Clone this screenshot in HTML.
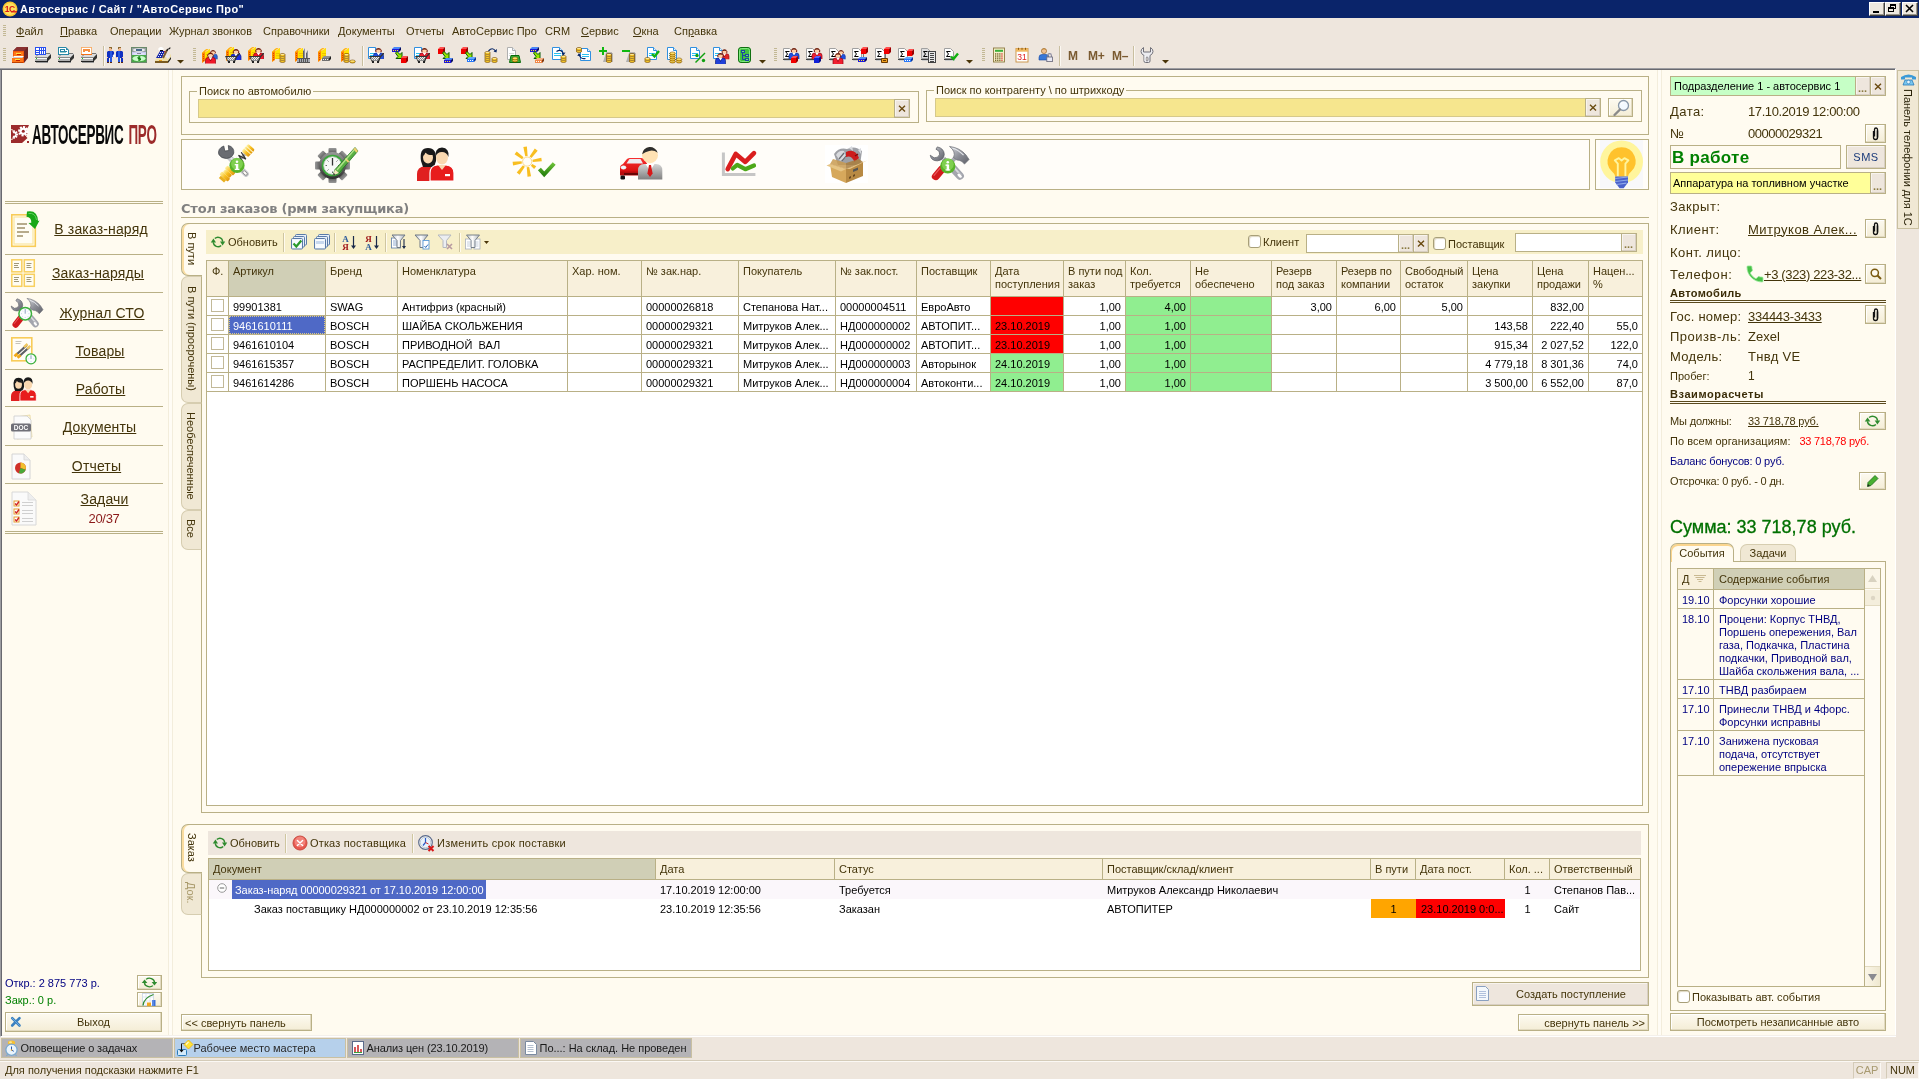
<!DOCTYPE html>
<html lang="ru"><head><meta charset="utf-8"><title>Автосервис / Сайт / "АвтоСервис Про"</title>
<style>
*{box-sizing:border-box;margin:0;padding:0}
html,body{width:1919px;height:1079px;overflow:hidden}
body{background:#EEE6DD;font:11px/13px "Liberation Sans",sans-serif;color:#000;position:relative}
#pg{position:absolute;left:0;top:0;width:1919px;height:1079px;overflow:hidden;will-change:transform}
.a{position:absolute}
.t{position:absolute;white-space:nowrap}
.u{text-decoration:underline}
.b{font-weight:bold}
.br{color:#43340A}
svg{position:absolute;overflow:visible}
.vt{position:absolute;white-space:nowrap;transform-origin:0 0;transform:rotate(90deg);color:#43340A}
.btn{position:absolute;border:1px solid #B9B086;background:linear-gradient(#FDFAF0,#F4EDD6);box-shadow:inset -1px -1px 0 #E2DAC0,inset 1px 1px 0 #fff}
.btg{position:absolute;border:1px solid #B9B086;background:#EEE6DD;box-shadow:inset -1px -1px 0 #D8CFC2,inset 1px 1px 0 #F8F4EE}
.inp{position:absolute;border:1px solid #B9B086;background:#fff}
.cell{position:absolute;white-space:nowrap;overflow:hidden;height:13px}
</style></head>
<body>
<div id="pg">
<div class="a" style="left:0px;top:0px;width:1919px;height:18px;background:#0A246A"></div>
<svg style="left:2px;top:1px" width="16" height="16" viewBox="0 0 16 16"><circle cx="8" cy="8" r="7.5" fill="#F8C830"/><circle cx="8" cy="8" r="6" fill="#FFE060"/><text x="7.6" y="11" font-family="Liberation Sans,sans-serif" font-size="8.5" font-weight="bold" text-anchor="middle" fill="#D81818" letter-spacing="-.6">1C</text><path d="M9 10.8h6" stroke="#D81818" stroke-width="1.3"/></svg>
<div class="t" style="left:20px;top:2.5px;color:#fff;font-weight:bold;letter-spacing:.35px">Автосервис / Сайт / "АвтоСервис Про"</div>
<div class="a" style="left:1869px;top:2px;width:16px;height:14px;background:#EEE9E0;border:1px solid;border-color:#fff #404040 #404040 #fff;box-shadow:inset -1px -1px 0 #9A958C"></div>
<div class="a" style="left:1873px;top:11px;width:6px;height:2px;background:#000"></div>
<div class="a" style="left:1885px;top:2px;width:16px;height:14px;background:#EEE9E0;border:1px solid;border-color:#fff #404040 #404040 #fff;box-shadow:inset -1px -1px 0 #9A958C"></div>
<div class="a" style="left:1890px;top:4px;width:6px;height:5px;border:1px solid #000;border-top-width:2px"></div>
<div class="a" style="left:1888px;top:7px;width:6px;height:5px;border:1px solid #000;border-top-width:2px;background:#EEE9E0"></div>
<div class="a" style="left:1902px;top:2px;width:16px;height:14px;background:#EEE9E0;border:1px solid;border-color:#fff #404040 #404040 #fff;box-shadow:inset -1px -1px 0 #9A958C"></div>
<svg style="left:1906px;top:5px" width="8" height="7" viewBox="0 0 8 7"><path d="M0 0l7 7M7 0l-7 7" stroke="#000" stroke-width="1.6"/></svg>
<div class="a" style="left:3px;top:25px;width:3px;height:1px;background:#C2B894"></div>
<div class="a" style="left:3px;top:27px;width:3px;height:1px;background:#C2B894"></div>
<div class="a" style="left:3px;top:29px;width:3px;height:1px;background:#C2B894"></div>
<div class="a" style="left:3px;top:31px;width:3px;height:1px;background:#C2B894"></div>
<div class="a" style="left:3px;top:33px;width:3px;height:1px;background:#C2B894"></div>
<div class="a" style="left:3px;top:35px;width:3px;height:1px;background:#C2B894"></div>
<div class="t" style="left:16px;top:24.5px;color:#43340A;"><u>Ф</u>айл</div>
<div class="t" style="left:60px;top:24.5px;color:#43340A;"><u>П</u>равка</div>
<div class="t" style="left:110px;top:24.5px;color:#43340A;">Операции</div>
<div class="t" style="left:169px;top:24.5px;color:#43340A;">Журнал звонков</div>
<div class="t" style="left:263px;top:24.5px;color:#43340A;">Справочники</div>
<div class="t" style="left:338px;top:24.5px;color:#43340A;">Документы</div>
<div class="t" style="left:406px;top:24.5px;color:#43340A;">Отчеты</div>
<div class="t" style="left:452px;top:24.5px;color:#43340A;">АвтоСервис Про</div>
<div class="t" style="left:545px;top:24.5px;color:#43340A;">CRM</div>
<div class="t" style="left:581px;top:24.5px;color:#43340A;"><u>С</u>ервис</div>
<div class="t" style="left:633px;top:24.5px;color:#43340A;"><u>О</u>кна</div>
<div class="t" style="left:674px;top:24.5px;color:#43340A;">Сп<u>р</u>авка</div>
<div class="a" style="left:3px;top:48px;width:3px;height:1px;background:#C2B894"></div>
<div class="a" style="left:3px;top:50px;width:3px;height:1px;background:#C2B894"></div>
<div class="a" style="left:3px;top:52px;width:3px;height:1px;background:#C2B894"></div>
<div class="a" style="left:3px;top:54px;width:3px;height:1px;background:#C2B894"></div>
<div class="a" style="left:3px;top:56px;width:3px;height:1px;background:#C2B894"></div>
<div class="a" style="left:3px;top:58px;width:3px;height:1px;background:#C2B894"></div>
<div class="a" style="left:3px;top:60px;width:3px;height:1px;background:#C2B894"></div>
<svg style="left:12px;top:47px" width="16" height="16" viewBox="0 0 16 16"><path d="M1 4l4-4h11v11l-4 5h-11z" fill="#6A2424"/><path d="M1 4l4-4h11l-4 4z" fill="#8A3030"/><rect x="1" y="4" width="11" height="12" fill="#F05808"/><rect x="2" y="5" width="9" height="4" fill="#FF7818"/><rect x="4" y="6" width="5" height="1" fill="#FFE040"/><rect x="5" y="7" width="4" height="1" fill="#C02000"/><path d="M0 11l2-2h10l-2 2z" fill="#fff"/><path d="M1 10.500h10" stroke="#BBB" stroke-width=".7"/><rect x="0" y="11" width="11" height="4" fill="#FF7818"/><rect x="3" y="12" width="5" height="1" fill="#FFE040"/><rect x="4" y="13" width="4" height="1" fill="#C02000"/><rect x="0" y="15" width="11" height="1" fill="#C04000"/></svg>
<svg style="left:35px;top:47px" width="16" height="16" viewBox="0 0 16 16"><path d="M0 10l4-4h12v4l-4 4h-12z" fill="#DCDCDC"/><path d="M12 11l4-4v4l-4 4z" fill="#333"/><path d="M1 9.500l3-3h11" fill="none" stroke="#777" stroke-width="1"/><rect x="0" y="10" width="12" height="1" fill="#888"/><rect x="0" y="11" width="12" height="1" fill="#F8F8F8"/><rect x="0" y="12" width="12" height="2" fill="#B0B0B0"/><rect x="0" y="14" width="13" height="1" fill="#222"/><rect x="1" y="15" width="12" height="1" fill="#999"/><rect x="1" y="11" width="1" height="1" fill="#18C018"/><rect x="0" y="0" width="11" height="8" fill="#2850F0"/><rect x="1" y="1" width="9" height="6" fill="#fff"/><rect x="1" y="3" width="9" height="1" fill="#2850F0"/><rect x="4" y="1" width="1" height="6" fill="#2850F0"/><rect x="6" y="1" width="1" height="6" fill="#2850F0"/><rect x="8" y="1" width="1" height="6" fill="#2850F0"/><rect x="1" y="5" width="3" height="1" fill="#2850F0"/></svg>
<svg style="left:58px;top:47px" width="16" height="16" viewBox="0 0 16 16"><path d="M0 10l4-4h12v4l-4 4h-12z" fill="#DCDCDC"/><path d="M12 11l4-4v4l-4 4z" fill="#333"/><path d="M1 9.500l3-3h11" fill="none" stroke="#777" stroke-width="1"/><rect x="0" y="10" width="12" height="1" fill="#888"/><rect x="0" y="11" width="12" height="1" fill="#F8F8F8"/><rect x="0" y="12" width="12" height="2" fill="#B0B0B0"/><rect x="0" y="14" width="13" height="1" fill="#222"/><rect x="1" y="15" width="12" height="1" fill="#999"/><rect x="1" y="11" width="1" height="1" fill="#18C018"/><path d="M0 0h8l3 3v5h-11z" fill="#2888A8"/><rect x="1" y="1" width="7" height="6" fill="#fff"/><rect x="8" y="3" width="2" height="4" fill="#fff"/><rect x="2" y="2" width="5" height="1" fill="#2888A8"/><rect x="2" y="4" width="7" height="1" fill="#2888A8"/><rect x="2" y="2" width="1" height="3" fill="#2888A8"/><rect x="6" y="2" width="1" height="2" fill="#2888A8"/><rect x="2" y="5" width="6" height="1" fill="#9CC"/></svg>
<svg style="left:81px;top:47px" width="16" height="16" viewBox="0 0 16 16"><path d="M0 10l4-4h12v4l-4 4h-12z" fill="#DCDCDC"/><path d="M12 11l4-4v4l-4 4z" fill="#333"/><path d="M1 9.500l3-3h11" fill="none" stroke="#777" stroke-width="1"/><rect x="0" y="10" width="12" height="1" fill="#888"/><rect x="0" y="11" width="12" height="1" fill="#F8F8F8"/><rect x="0" y="12" width="12" height="2" fill="#B0B0B0"/><rect x="0" y="14" width="13" height="1" fill="#222"/><rect x="1" y="15" width="12" height="1" fill="#999"/><rect x="1" y="11" width="1" height="1" fill="#18C018"/><rect x="0" y="0" width="11" height="8" fill="#FFE8A0"/><rect x=".5" y=".5" width="10" height="7" fill="#fff" stroke="#F07018" stroke-width="1" stroke-dasharray="1 1"/><rect x="0" y="7" width="11" height="1" fill="#F07018"/><rect x="2" y="2" width="7" height="2" fill="#F89040"/><rect x="2" y="4" width="2" height="1" fill="#F89040"/><rect x="7" y="4" width="2" height="1" fill="#F89040"/></svg>
<div class="a" style="left:103px;top:46px;width:1px;height:20px;background:#C9BFA0"></div>
<div class="a" style="left:104px;top:46px;width:1px;height:20px;background:#FBF8F2"></div>
<svg style="left:107px;top:47px" width="16" height="16" viewBox="0 0 16 16"><g transform="translate(0 0) scale(1 1)"><rect x="2" y="0" width="3" height="1" fill="#8A6A30"/><rect x="2" y="1" width="3" height="3" fill="#F0B890"/><rect x="4" y="1" width="1" height="1" fill="#8A6A30"/><path d="M1 4h5l1 1v6h-1v-1h-1v6h-2v-5h-1v5h-2v-6h0v-5z" fill="#1030C0"/><rect x="0" y="5" width="1" height="5" fill="#1030C0"/><rect x="3" y="4" width="2" height="11" fill="#2858E0"/><rect x="0" y="10" width="1" height="1" fill="#F0B890"/><rect x="6" y="10" width="1" height="1" fill="#F0B890"/><rect x="0" y="15" width="2" height="1" fill="#5A2A10"/><rect x="3" y="15" width="2" height="1" fill="#5A2A10"/></g><g transform="translate(16 0) scale(-1 1)"><rect x="2" y="0" width="3" height="1" fill="#8A6A30"/><rect x="2" y="1" width="3" height="3" fill="#F0B890"/><rect x="4" y="1" width="1" height="1" fill="#8A6A30"/><path d="M1 4h5l1 1v6h-1v-1h-1v6h-2v-5h-1v5h-2v-6h0v-5z" fill="#1030C0"/><rect x="0" y="5" width="1" height="5" fill="#1030C0"/><rect x="3" y="4" width="2" height="11" fill="#2858E0"/><rect x="0" y="10" width="1" height="1" fill="#F0B890"/><rect x="6" y="10" width="1" height="1" fill="#F0B890"/><rect x="0" y="15" width="2" height="1" fill="#5A2A10"/><rect x="3" y="15" width="2" height="1" fill="#5A2A10"/></g><path d="M7 7l1.500 2-1.500 2-1.500-2z" fill="#fff"/></svg>
<svg style="left:131px;top:47px" width="16" height="16" viewBox="0 0 16 16"><rect x="0" y="0" width="16" height="16" fill="#6A8A6A"/><rect x="1" y="1" width="14" height="4" fill="#98A0A0"/><ellipse cx="8" cy="3" rx="6" ry="1.800" fill="#E8ECEC"/><rect x="5" y="2" width="6" height="2" fill="#4A6A8A"/><rect x="1" y="5" width="14" height="3" fill="#C8C8F0"/><ellipse cx="8" cy="7" rx="6.500" ry="1.500" fill="#E0E0FA"/><rect x="6" y="6" width="4" height="1" fill="#889"/><rect x="1" y="8" width="14" height="7" fill="#48A848"/><ellipse cx="8" cy="11.500" rx="6.500" ry="2.800" fill="#C8FCC8"/><path d="M9.500 10h-2.500v1.500h2.500v1.500h-2.500M8.250 9.300v4.500" fill="none" stroke="#108010" stroke-width="1"/></svg>
<svg style="left:155px;top:47px" width="16" height="16" viewBox="0 0 16 16"><path d="M0 13l3-3h10l3-3v5l-3 4h-13z" fill="#F0E0A8"/><rect x="0" y="14" width="13" height="2" fill="#7A5A20"/><path d="M13 16l3-4v-2l-3 4z" fill="#222"/><rect x="4" y="13" width="3" height="1" fill="#E8A020"/><path d="M1 11l4-7h5l-3 7z" fill="#1828A8"/><rect x="5" y="5" width="1" height="1" fill="#E0E8FF"/><rect x="7" y="5" width="1" height="1" fill="#E0E8FF"/><rect x="4" y="7" width="1" height="1" fill="#E0E8FF"/><rect x="6" y="7" width="1" height="1" fill="#E0E8FF"/><rect x="3" y="9" width="1" height="1" fill="#E0E8FF"/><rect x="5" y="9" width="1" height="1" fill="#E0E8FF"/><rect x="8" y="7" width="1" height="1" fill="#E0E8FF"/><path d="M9 4l1.500 0-.5 2z" fill="#E01010"/><path d="M8 11l4-8" stroke="#7A5A30" stroke-width="2"/><path d="M12 4q0-2 1.500-2t1.500-1.500" fill="none" stroke="#111" stroke-width="1.200"/><path d="M3 2l2-2h2l2 2-2 1.500h-3z" fill="#fff"/><rect x="5" y="3" width="3" height="1" fill="#111"/><path d="M11 9l3-1 1 2-3 2z" fill="#E8E8F0"/></svg>
<svg style="left:177px;top:60px" width="7" height="4" viewBox="0 0 7 4"><path d="M0 0h7l-3.500 3.600z" fill="#4A3508"/></svg>
<div class="a" style="left:193px;top:48px;width:3px;height:1px;background:#C2B894"></div>
<div class="a" style="left:193px;top:50px;width:3px;height:1px;background:#C2B894"></div>
<div class="a" style="left:193px;top:52px;width:3px;height:1px;background:#C2B894"></div>
<div class="a" style="left:193px;top:54px;width:3px;height:1px;background:#C2B894"></div>
<div class="a" style="left:193px;top:56px;width:3px;height:1px;background:#C2B894"></div>
<div class="a" style="left:193px;top:58px;width:3px;height:1px;background:#C2B894"></div>
<div class="a" style="left:193px;top:60px;width:3px;height:1px;background:#C2B894"></div>
<svg style="left:202px;top:47px" width="16" height="16" viewBox="0 0 16 16"><path d="M0 6l3-3 2-1h3v11h-5l-3 2z" fill="#FFE400"/><path d="M0 6l3-2v10l-3 2z" fill="#FF8800"/><path d="M0 6l3-3 2-1h3l-5 3.500z" fill="#FFA818"/><path d="M3.5 4.5l4-2.500" stroke="#FFF8C0" stroke-width=".8"/><rect x="1" y="7" width="1" height="1" fill="#D84800"/><rect x="1" y="9" width="1" height="1" fill="#D84800"/><rect x="1" y="11" width="1" height="1" fill="#D84800"/><rect x="1" y="13" width="1" height="1" fill="#D84800"/><rect x="4" y="7.0" width="4" height="0.7" fill="#E8B000"/><rect x="4" y="9.5" width="4" height="0.7" fill="#E8B000"/><rect x="4" y="12.0" width="4" height="0.7" fill="#E8B000"/><g transform="translate(11 5.5) scale(0.85)"><path d="M-5 8v-3.500q0-2.500 2.500-2.500h5q2.500 0 2.500 2.500v3.500z" fill="#2868D8"/><path d="M-5 8v-3.500q0-2.500 2.500-2.500h1l1.500 3.500 1.500-3.500h1q2.500 0 2.500 2.500v3.500" fill="none" stroke="#103090" stroke-width=".7"/><path d="M-1.800 1.800l1.800 2.700 1.800-2.700z" fill="#fff"/><rect x="-3.300" y="-1.500" width="6.600" height="2.600" rx="1.200" fill="#7A1A10"/><circle cy="-.2" r="2.300" fill="#FFD0A8"/><path d="M-2.500-.8q0-2.200 2.500-2.200t2.500 2.200q-2.500-1.200-5 0z" fill="#6A1A0A"/></g><g transform="translate(8.5 8.5) scale(1)"><path d="M-5 8v-3.500q0-2.500 2.500-2.500h5q2.500 0 2.500 2.500v3.500z" fill="#F01828"/><path d="M-5 8v-3.500q0-2.500 2.500-2.500h1l1.500 3.500 1.500-3.500h1q2.500 0 2.500 2.500v3.500" fill="none" stroke="#900010" stroke-width=".7"/><path d="M-1.800 1.800l1.800 2.700 1.800-2.700z" fill="#fff"/><rect x="-3.300" y="-1.500" width="6.600" height="2.600" rx="1.200" fill="#7A1A10"/><circle cy="-.2" r="2.300" fill="#FFD0A8"/><path d="M-2.500-.8q0-2.200 2.500-2.200t2.500 2.200q-2.500-1.200-5 0z" fill="#6A1A0A"/></g></svg>
<svg style="left:225px;top:47px" width="16" height="16" viewBox="0 0 16 16"><path d="M1 4l3-3 2-1h3v11h-5l-3 2z" fill="#FFE400"/><path d="M1 4l3-2v10l-3 2z" fill="#FF8800"/><path d="M1 4l3-3 2-1h3l-5 3.500z" fill="#FFA818"/><path d="M4.5 2.5l4-2.500" stroke="#FFF8C0" stroke-width=".8"/><rect x="2" y="5" width="1" height="1" fill="#D84800"/><rect x="2" y="7" width="1" height="1" fill="#D84800"/><rect x="2" y="9" width="1" height="1" fill="#D84800"/><rect x="2" y="11" width="1" height="1" fill="#D84800"/><rect x="5" y="5.0" width="4" height="0.7" fill="#E8B000"/><rect x="5" y="7.5" width="4" height="0.7" fill="#E8B000"/><rect x="5" y="10.0" width="4" height="0.7" fill="#E8B000"/><g transform="translate(11 5) scale(1)"><path d="M-5 8v-3.500q0-2.500 2.500-2.500h5q2.500 0 2.500 2.500v3.500z" fill="#2030E0"/><path d="M-5 8v-3.500q0-2.500 2.500-2.500h1l1.500 3.500 1.500-3.500h1q2.500 0 2.500 2.500v3.500" fill="none" stroke="#101890" stroke-width=".7"/><path d="M-1.800 1.800l1.800 2.700 1.800-2.700z" fill="#fff"/><rect x="-3.300" y="-1.500" width="6.600" height="2.600" rx="1.200" fill="#7A1A10"/><circle cy="-.2" r="2.300" fill="#FFD0A8"/><path d="M-2.500-.8q0-2.200 2.500-2.200t2.500 2.200q-2.500-1.200-5 0z" fill="#6A1A0A"/></g><path d="M0 9h11l3-3h1v1l-3 3-2 5h-7z" fill="#333"/><path d="M1.5 10h9l-1.500 3.500h-5.500z" fill="#EEE"/><rect x="2" y="10" width="1" height="1" fill="#888"/><rect x="3" y="11" width="1" height="1" fill="#888"/><rect x="2" y="12" width="1" height="1" fill="#888"/><rect x="4" y="10" width="1" height="1" fill="#888"/><rect x="5" y="11" width="1" height="1" fill="#888"/><rect x="4" y="12" width="1" height="1" fill="#888"/><rect x="6" y="10" width="1" height="1" fill="#888"/><rect x="7" y="11" width="1" height="1" fill="#888"/><rect x="6" y="12" width="1" height="1" fill="#888"/><rect x="8" y="10" width="1" height="1" fill="#888"/><rect x="9" y="11" width="1" height="1" fill="#888"/><rect x="8" y="12" width="1" height="1" fill="#888"/><rect x="3" y="14" width="2" height="2" fill="#222"/><rect x="8" y="14" width="2" height="2" fill="#222"/><rect x="5" y="14" width="3" height="1" fill="#EEE6DD"/></svg>
<svg style="left:248px;top:47px" width="16" height="16" viewBox="0 0 16 16"><path d="M0 4l3-3 2-1h3v11h-5l-3 2z" fill="#FFE400"/><path d="M0 4l3-2v10l-3 2z" fill="#FF8800"/><path d="M0 4l3-3 2-1h3l-5 3.500z" fill="#FFA818"/><path d="M3.5 2.5l4-2.500" stroke="#FFF8C0" stroke-width=".8"/><rect x="1" y="5" width="1" height="1" fill="#D84800"/><rect x="1" y="7" width="1" height="1" fill="#D84800"/><rect x="1" y="9" width="1" height="1" fill="#D84800"/><rect x="1" y="11" width="1" height="1" fill="#D84800"/><rect x="4" y="5.0" width="4" height="0.7" fill="#E8B000"/><rect x="4" y="7.5" width="4" height="0.7" fill="#E8B000"/><rect x="4" y="10.0" width="4" height="0.7" fill="#E8B000"/><g transform="translate(10.5 4) scale(1)"><path d="M-5 8v-3.500q0-2.500 2.500-2.500h5q2.500 0 2.500 2.500v3.500z" fill="#F01828"/><path d="M-5 8v-3.500q0-2.500 2.500-2.500h1l1.500 3.500 1.500-3.500h1q2.500 0 2.500 2.500v3.500" fill="none" stroke="#900010" stroke-width=".7"/><path d="M-1.800 1.800l1.800 2.700 1.800-2.700z" fill="#fff"/><rect x="-3.300" y="-1.500" width="6.600" height="2.600" rx="1.200" fill="#7A1A10"/><circle cy="-.2" r="2.300" fill="#FFD0A8"/><path d="M-2.500-.8q0-2.200 2.500-2.200t2.500 2.200q-2.500-1.200-5 0z" fill="#6A1A0A"/></g><path d="M1 9h11l3-3h1v1l-3 3-2 5h-7z" fill="#333"/><path d="M2.5 10h9l-1.500 3.500h-5.500z" fill="#EEE"/><rect x="3" y="10" width="1" height="1" fill="#888"/><rect x="4" y="11" width="1" height="1" fill="#888"/><rect x="3" y="12" width="1" height="1" fill="#888"/><rect x="5" y="10" width="1" height="1" fill="#888"/><rect x="6" y="11" width="1" height="1" fill="#888"/><rect x="5" y="12" width="1" height="1" fill="#888"/><rect x="7" y="10" width="1" height="1" fill="#888"/><rect x="8" y="11" width="1" height="1" fill="#888"/><rect x="7" y="12" width="1" height="1" fill="#888"/><rect x="9" y="10" width="1" height="1" fill="#888"/><rect x="10" y="11" width="1" height="1" fill="#888"/><rect x="9" y="12" width="1" height="1" fill="#888"/><rect x="4" y="14" width="2" height="2" fill="#222"/><rect x="9" y="14" width="2" height="2" fill="#222"/><rect x="6" y="14" width="3" height="1" fill="#EEE6DD"/></svg>
<svg style="left:271px;top:47px" width="16" height="16" viewBox="0 0 16 16"><path d="M1 5l3-3 2-1h3v11h-5l-3 2z" fill="#FFE400"/><path d="M1 5l3-2v10l-3 2z" fill="#FF8800"/><path d="M1 5l3-3 2-1h3l-5 3.500z" fill="#FFA818"/><path d="M4.5 3.5l4-2.500" stroke="#FFF8C0" stroke-width=".8"/><rect x="2" y="6" width="1" height="1" fill="#D84800"/><rect x="2" y="8" width="1" height="1" fill="#D84800"/><rect x="2" y="10" width="1" height="1" fill="#D84800"/><rect x="2" y="12" width="1" height="1" fill="#D84800"/><rect x="5" y="6.0" width="4" height="0.7" fill="#E8B000"/><rect x="5" y="8.5" width="4" height="0.7" fill="#E8B000"/><rect x="5" y="11.0" width="4" height="0.7" fill="#E8B000"/><ellipse cx="11.5" cy="14" rx="2.800" ry="1.500" fill="#F8C41C" stroke="#6A4000" stroke-width=".6"/><path d="M9.7 13.6h3.600" stroke="#FFF8C8" stroke-width=".8"/><ellipse cx="11.5" cy="12" rx="2.800" ry="1.500" fill="#F8C41C" stroke="#6A4000" stroke-width=".6"/><path d="M9.7 11.6h3.600" stroke="#FFF8C8" stroke-width=".8"/><ellipse cx="11.5" cy="10" rx="2.800" ry="1.500" fill="#F8C41C" stroke="#6A4000" stroke-width=".6"/><path d="M9.7 9.6h3.600" stroke="#FFF8C8" stroke-width=".8"/><ellipse cx="11.5" cy="8" rx="2.800" ry="1.500" fill="#F8C41C" stroke="#6A4000" stroke-width=".6"/><path d="M9.7 7.6h3.600" stroke="#FFF8C8" stroke-width=".8"/></svg>
<svg style="left:294px;top:47px" width="16" height="16" viewBox="0 0 16 16"><path d="M1 5l3-3 2-1h3v11h-5l-3 2z" fill="#FFE400"/><path d="M1 5l3-2v10l-3 2z" fill="#FF8800"/><path d="M1 5l3-3 2-1h3l-5 3.500z" fill="#FFA818"/><path d="M4.5 3.5l4-2.500" stroke="#FFF8C0" stroke-width=".8"/><rect x="2" y="6" width="1" height="1" fill="#D84800"/><rect x="2" y="8" width="1" height="1" fill="#D84800"/><rect x="2" y="10" width="1" height="1" fill="#D84800"/><rect x="2" y="12" width="1" height="1" fill="#D84800"/><rect x="5" y="6.0" width="4" height="0.7" fill="#E8B000"/><rect x="5" y="8.5" width="4" height="0.7" fill="#E8B000"/><rect x="5" y="11.0" width="4" height="0.7" fill="#E8B000"/><path d="M9 13v-9l2-3v12zM12 13v-7l2-3v10z" fill="#8A909A"/><path d="M9.500 13v-9M12.500 13v-7" stroke="#555" stroke-width=".8"/><rect x="3" y="11" width="13" height="4" fill="#A8ACB4"/><rect x="3" y="11" width="13" height="1" fill="#555"/><rect x="3" y="15" width="13" height="1" fill="#555"/><rect x="5" y="12" width="1" height="3" fill="#555"/><rect x="7" y="12" width="1" height="3" fill="#555"/><rect x="9" y="12" width="1" height="3" fill="#555"/><rect x="11" y="12" width="1" height="3" fill="#555"/><rect x="13" y="12" width="1" height="3" fill="#555"/></svg>
<svg style="left:317px;top:47px" width="16" height="16" viewBox="0 0 16 16"><path d="M1 5l3-3 2-1h3v11h-5l-3 2z" fill="#FFE400"/><path d="M1 5l3-2v10l-3 2z" fill="#FF8800"/><path d="M1 5l3-3 2-1h3l-5 3.500z" fill="#FFA818"/><path d="M4.5 3.5l4-2.500" stroke="#FFF8C0" stroke-width=".8"/><rect x="2" y="6" width="1" height="1" fill="#D84800"/><rect x="2" y="8" width="1" height="1" fill="#D84800"/><rect x="2" y="10" width="1" height="1" fill="#D84800"/><rect x="2" y="12" width="1" height="1" fill="#D84800"/><rect x="5" y="6.0" width="4" height="0.7" fill="#E8B000"/><rect x="5" y="8.5" width="4" height="0.7" fill="#E8B000"/><rect x="5" y="11.0" width="4" height="0.7" fill="#E8B000"/><rect x="5" y="11" width="7" height="3" fill="#707070"/><path d="M5 11l2-2h7l-2 2z" fill="#909090"/><path d="M12 11l2-2v3l-2 2z" fill="#222"/><rect x="6" y="12" width="1" height="1" fill="#EEE"/><rect x="8" y="12" width="1" height="1" fill="#EEE"/><rect x="10" y="12" width="1" height="1" fill="#EEE"/></svg>
<svg style="left:340px;top:47px" width="16" height="16" viewBox="0 0 16 16"><path d="M1 5l3-3 2-1h3v11h-5l-3 2z" fill="#FFE400"/><path d="M1 5l3-2v10l-3 2z" fill="#FF8800"/><path d="M1 5l3-3 2-1h3l-5 3.500z" fill="#FFA818"/><path d="M4.5 3.5l4-2.500" stroke="#FFF8C0" stroke-width=".8"/><rect x="2" y="6" width="1" height="1" fill="#D84800"/><rect x="2" y="8" width="1" height="1" fill="#D84800"/><rect x="2" y="10" width="1" height="1" fill="#D84800"/><rect x="2" y="12" width="1" height="1" fill="#D84800"/><rect x="5" y="6.0" width="4" height="0.7" fill="#E8B000"/><rect x="5" y="8.5" width="4" height="0.7" fill="#E8B000"/><rect x="5" y="11.0" width="4" height="0.7" fill="#E8B000"/><ellipse cx="6.5" cy="14" rx="2.800" ry="1.500" fill="#F8C41C" stroke="#6A4000" stroke-width=".6"/><path d="M4.7 13.6h3.600" stroke="#FFF8C8" stroke-width=".8"/><ellipse cx="6.5" cy="12" rx="2.800" ry="1.500" fill="#F8C41C" stroke="#6A4000" stroke-width=".6"/><path d="M4.7 11.6h3.600" stroke="#FFF8C8" stroke-width=".8"/><ellipse cx="6.5" cy="10" rx="2.800" ry="1.500" fill="#F8C41C" stroke="#6A4000" stroke-width=".6"/><path d="M4.7 9.6h3.600" stroke="#FFF8C8" stroke-width=".8"/><ellipse cx="6.5" cy="8" rx="2.800" ry="1.500" fill="#F8C41C" stroke="#6A4000" stroke-width=".6"/><path d="M4.7 7.6h3.600" stroke="#FFF8C8" stroke-width=".8"/><ellipse cx="12.5" cy="14.5" rx="2.800" ry="1.500" fill="#F8C41C" stroke="#6A4000" stroke-width=".6"/><path d="M10.7 14.1h3.600" stroke="#FFF8C8" stroke-width=".8"/></svg>
<div class="a" style="left:362px;top:46px;width:1px;height:20px;background:#C9BFA0"></div>
<div class="a" style="left:363px;top:46px;width:1px;height:20px;background:#FBF8F2"></div>
<svg style="left:368px;top:47px" width="16" height="16" viewBox="0 0 16 16"><path d="M0.5 0.5h7l3 3v8h-10z" fill="#fff" stroke="#3090E0" stroke-width="1"/><path d="M7.5 0.5v3h3" fill="#E8F2FC" stroke="#3090E0" stroke-width="1"/><rect x="2" y="6" width="7" height="1" fill="#28C0F0"/><rect x="2" y="8" width="7" height="1" fill="#28C0F0"/><g transform="translate(10.5 4) scale(1)"><path d="M-5 8v-3.500q0-2.500 2.500-2.500h5q2.500 0 2.500 2.500v3.500z" fill="#2050E0"/><path d="M-5 8v-3.500q0-2.500 2.500-2.500h1l1.500 3.500 1.500-3.500h1q2.500 0 2.500 2.500v3.500" fill="none" stroke="#102890" stroke-width=".7"/><path d="M-1.800 1.800l1.800 2.700 1.800-2.700z" fill="#fff"/><rect x="-3.300" y="-1.500" width="6.600" height="2.600" rx="1.200" fill="#7A1A10"/><circle cy="-.2" r="2.300" fill="#FFD0A8"/><path d="M-2.500-.8q0-2.200 2.500-2.200t2.500 2.200q-2.500-1.200-5 0z" fill="#6A1A0A"/></g><path d="M1 9h11l3-3h1v1l-3 3-2 5h-7z" fill="#333"/><path d="M2.5 10h9l-1.500 3.500h-5.500z" fill="#EEE"/><rect x="3" y="10" width="1" height="1" fill="#888"/><rect x="4" y="11" width="1" height="1" fill="#888"/><rect x="3" y="12" width="1" height="1" fill="#888"/><rect x="5" y="10" width="1" height="1" fill="#888"/><rect x="6" y="11" width="1" height="1" fill="#888"/><rect x="5" y="12" width="1" height="1" fill="#888"/><rect x="7" y="10" width="1" height="1" fill="#888"/><rect x="8" y="11" width="1" height="1" fill="#888"/><rect x="7" y="12" width="1" height="1" fill="#888"/><rect x="9" y="10" width="1" height="1" fill="#888"/><rect x="10" y="11" width="1" height="1" fill="#888"/><rect x="9" y="12" width="1" height="1" fill="#888"/><rect x="4" y="14" width="2" height="2" fill="#222"/><rect x="9" y="14" width="2" height="2" fill="#222"/><rect x="6" y="14" width="3" height="1" fill="#EEE6DD"/></svg>
<svg style="left:391px;top:47px" width="16" height="16" viewBox="0 0 16 16"><rect x="1" y="2" width="7" height="3" fill="#2018D8"/><path d="M1 2l2-2h7l-2 2z" fill="#4888F8"/><path d="M8 2l2-2v3l-2 2z" fill="#081060"/><rect x="2" y="3" width="1" height="1" fill="#FFE820"/><rect x="4" y="3" width="1" height="1" fill="#FFE820"/><rect x="6" y="3" width="1" height="1" fill="#FFE820"/><path d="M4.5 6l1.500-1.500 3 3 2-2v6h-6l2-2z" fill="#98E800" stroke="#085808" stroke-width="1"/><rect x="10" y="11" width="5" height="5" fill="#F00000"/><path d="M10 11l2-2h5l-2 2z" fill="#FF5050"/><path d="M15 11l2-2v5l-2 2z" fill="#980000"/></svg>
<svg style="left:414px;top:47px" width="16" height="16" viewBox="0 0 16 16"><path d="M0.5 0.5h7l3 3v8h-10z" fill="#fff" stroke="#3090E0" stroke-width="1"/><path d="M7.5 0.5v3h3" fill="#E8F2FC" stroke="#3090E0" stroke-width="1"/><rect x="2" y="6" width="7" height="1" fill="#28C0F0"/><rect x="2" y="8" width="7" height="1" fill="#28C0F0"/><g transform="translate(10.5 4) scale(1)"><path d="M-5 8v-3.500q0-2.500 2.500-2.500h5q2.500 0 2.500 2.500v3.500z" fill="#F02030"/><path d="M-5 8v-3.500q0-2.500 2.500-2.500h1l1.500 3.500 1.500-3.500h1q2.500 0 2.500 2.500v3.500" fill="none" stroke="#900010" stroke-width=".7"/><path d="M-1.800 1.800l1.800 2.700 1.800-2.700z" fill="#fff"/><rect x="-3.300" y="-1.500" width="6.600" height="2.600" rx="1.200" fill="#7A1A10"/><circle cy="-.2" r="2.300" fill="#FFD0A8"/><path d="M-2.500-.8q0-2.200 2.500-2.200t2.500 2.200q-2.500-1.200-5 0z" fill="#6A1A0A"/></g><path d="M1 9h11l3-3h1v1l-3 3-2 5h-7z" fill="#333"/><path d="M2.5 10h9l-1.500 3.500h-5.500z" fill="#EEE"/><rect x="3" y="10" width="1" height="1" fill="#888"/><rect x="4" y="11" width="1" height="1" fill="#888"/><rect x="3" y="12" width="1" height="1" fill="#888"/><rect x="5" y="10" width="1" height="1" fill="#888"/><rect x="6" y="11" width="1" height="1" fill="#888"/><rect x="5" y="12" width="1" height="1" fill="#888"/><rect x="7" y="10" width="1" height="1" fill="#888"/><rect x="8" y="11" width="1" height="1" fill="#888"/><rect x="7" y="12" width="1" height="1" fill="#888"/><rect x="9" y="10" width="1" height="1" fill="#888"/><rect x="10" y="11" width="1" height="1" fill="#888"/><rect x="9" y="12" width="1" height="1" fill="#888"/><rect x="4" y="14" width="2" height="2" fill="#222"/><rect x="9" y="14" width="2" height="2" fill="#222"/><rect x="6" y="14" width="3" height="1" fill="#EEE6DD"/></svg>
<svg style="left:437px;top:47px" width="16" height="16" viewBox="0 0 16 16"><rect x="1" y="2" width="5" height="5" fill="#F00000"/><path d="M1 2l2-2h5l-2 2z" fill="#FF5050"/><path d="M6 2l2-2v5l-2 2z" fill="#980000"/><path d="M5.5 6l1.500-1.500 3 3 2-2v6h-6l2-2z" fill="#98E800" stroke="#085808" stroke-width="1"/><rect x="7" y="13" width="7" height="3" fill="#2018D8"/><path d="M7 13l2-2h7l-2 2z" fill="#4888F8"/><path d="M14 13l2-2v3l-2 2z" fill="#081060"/><rect x="8" y="14" width="1" height="1" fill="#FFE820"/><rect x="10" y="14" width="1" height="1" fill="#FFE820"/><rect x="12" y="14" width="1" height="1" fill="#FFE820"/></svg>
<svg style="left:460px;top:47px" width="16" height="16" viewBox="0 0 16 16"><rect x="1" y="2" width="5" height="5" fill="#F00000"/><path d="M1 2l2-2h5l-2 2z" fill="#FF5050"/><path d="M6 2l2-2v5l-2 2z" fill="#980000"/><path d="M5.5 6l1.500-1.500 3 3 2-2v6h-6l2-2z" fill="#98E800" stroke="#085808" stroke-width="1"/><rect x="7" y="12" width="7" height="3" fill="#2878F8"/><path d="M7 12l2-2h7l-2 2z" fill="#60A8FF"/><path d="M14 12l2-2v3l-2 2z" fill="#0838A0"/><rect x="8" y="13" width="1" height="1" fill="#fff"/><rect x="10" y="13" width="1" height="1" fill="#fff"/><rect x="12" y="13" width="1" height="1" fill="#fff"/></svg>
<svg style="left:483px;top:47px" width="16" height="16" viewBox="0 0 16 16"><ellipse cx="4.5" cy="14" rx="2.800" ry="1.500" fill="#F8C41C" stroke="#6A4000" stroke-width=".6"/><path d="M2.7 13.6h3.600" stroke="#FFF8C8" stroke-width=".8"/><ellipse cx="4.5" cy="12" rx="2.800" ry="1.500" fill="#F8C41C" stroke="#6A4000" stroke-width=".6"/><path d="M2.7 11.6h3.600" stroke="#FFF8C8" stroke-width=".8"/><ellipse cx="4.5" cy="10" rx="2.800" ry="1.500" fill="#F8C41C" stroke="#6A4000" stroke-width=".6"/><path d="M2.7 9.6h3.600" stroke="#FFF8C8" stroke-width=".8"/><ellipse cx="4.5" cy="8" rx="2.800" ry="1.500" fill="#F8C41C" stroke="#6A4000" stroke-width=".6"/><path d="M2.7 7.6h3.600" stroke="#FFF8C8" stroke-width=".8"/><ellipse cx="4.5" cy="6" rx="2.800" ry="1.500" fill="#F8C41C" stroke="#6A4000" stroke-width=".6"/><path d="M2.7 5.6h3.600" stroke="#FFF8C8" stroke-width=".8"/><ellipse cx="11.5" cy="14" rx="2.800" ry="1.500" fill="#F8C41C" stroke="#6A4000" stroke-width=".6"/><path d="M9.7 13.6h3.600" stroke="#FFF8C8" stroke-width=".8"/><ellipse cx="11.5" cy="12" rx="2.800" ry="1.500" fill="#F8C41C" stroke="#6A4000" stroke-width=".6"/><path d="M9.7 11.6h3.600" stroke="#FFF8C8" stroke-width=".8"/><path d="M5.500 4q4-4.500 7 0" fill="none" stroke="#0A2868" stroke-width="1.200"/><path d="M10.500 4.500l3 1 .5-3.500z" fill="#0A2868"/></svg>
<svg style="left:506px;top:47px" width="16" height="16" viewBox="0 0 16 16"><path d="M1.5 0.5h5l3 3v9h-8z" fill="#fff" stroke="#B0B0B0" stroke-width="1"/><path d="M6.5 0.5v3h3" fill="#E8F2FC" stroke="#B0B0B0" stroke-width="1"/><rect x="3" y="6" width="5" height="1" fill="#D8D8D8"/><rect x="3" y="8" width="5" height="1" fill="#D8D8D8"/><path d="M3.500 15.500l1.500-7h8l1.500 7z" fill="#38B038" stroke="#0A6A0A" stroke-width="1"/><ellipse cx="9" cy="13.5" rx="2.800" ry="1.500" fill="#F8C41C" stroke="#6A4000" stroke-width=".6"/><path d="M7.2 13.1h3.600" stroke="#FFF8C8" stroke-width=".8"/><ellipse cx="9" cy="11.5" rx="2.800" ry="1.500" fill="#F8C41C" stroke="#6A4000" stroke-width=".6"/><path d="M7.2 11.1h3.600" stroke="#FFF8C8" stroke-width=".8"/></svg>
<svg style="left:529px;top:47px" width="16" height="16" viewBox="0 0 16 16"><rect x="1" y="2" width="7" height="3" fill="#2018D8"/><path d="M1 2l2-2h7l-2 2z" fill="#4888F8"/><path d="M8 2l2-2v3l-2 2z" fill="#081060"/><rect x="2" y="3" width="1" height="1" fill="#FFE820"/><rect x="4" y="3" width="1" height="1" fill="#FFE820"/><rect x="6" y="3" width="1" height="1" fill="#FFE820"/><path d="M4.5 6l1.500-1.500 3 3 2-2v6h-6l2-2z" fill="#98E800" stroke="#085808" stroke-width="1"/><rect x="6" y="13" width="7" height="3" fill="#F08848"/><path d="M6 13l2-2h7l-2 2z" fill="#F8B080"/><path d="M13 13l2-2v3l-2 2z" fill="#803810"/><rect x="7" y="14" width="1" height="1" fill="#fff"/><rect x="9" y="14" width="1" height="1" fill="#fff"/><rect x="11" y="14" width="1" height="1" fill="#fff"/></svg>
<svg style="left:552px;top:47px" width="16" height="16" viewBox="0 0 16 16"><path d="M0.5 0.5h7l3 3v9h-10z" fill="#fff" stroke="#3090E0" stroke-width="1"/><path d="M7.5 0.5v3h3" fill="#E8F2FC" stroke="#3090E0" stroke-width="1"/><rect x="2" y="6" width="7" height="1" fill="#28C0F0"/><rect x="2" y="8" width="7" height="1" fill="#28C0F0"/><path d="M4.500 4.500q5-3 7 2.500" fill="none" stroke="#0A2868" stroke-width="1.200"/><path d="M9.500 6l2 2.500 2-3z" fill="#0A2868"/><ellipse cx="11.5" cy="14" rx="2.800" ry="1.500" fill="#F8C41C" stroke="#6A4000" stroke-width=".6"/><path d="M9.7 13.6h3.600" stroke="#FFF8C8" stroke-width=".8"/><ellipse cx="11.5" cy="12" rx="2.800" ry="1.500" fill="#F8C41C" stroke="#6A4000" stroke-width=".6"/><path d="M9.7 11.6h3.600" stroke="#FFF8C8" stroke-width=".8"/><ellipse cx="11.5" cy="10" rx="2.800" ry="1.500" fill="#F8C41C" stroke="#6A4000" stroke-width=".6"/><path d="M9.7 9.6h3.600" stroke="#FFF8C8" stroke-width=".8"/></svg>
<svg style="left:575px;top:47px" width="16" height="16" viewBox="0 0 16 16"><path d="M5.5 1.5h7l3 3v9h-10z" fill="#fff" stroke="#3090E0" stroke-width="1"/><path d="M12.5 1.5v3h3" fill="#E8F2FC" stroke="#3090E0" stroke-width="1"/><rect x="7" y="7" width="7" height="1" fill="#28C0F0"/><rect x="7" y="9" width="7" height="1" fill="#28C0F0"/><ellipse cx="4" cy="4" rx="2.800" ry="1.500" fill="#F8C41C" stroke="#6A4000" stroke-width=".6"/><path d="M2.2 3.6h3.600" stroke="#FFF8C8" stroke-width=".8"/><ellipse cx="4" cy="2" rx="2.800" ry="1.500" fill="#F8C41C" stroke="#6A4000" stroke-width=".6"/><path d="M2.2 1.6h3.600" stroke="#FFF8C8" stroke-width=".8"/><path d="M4 7q1 5.500 6.500 4.500" fill="none" stroke="#0A2868" stroke-width="1.200"/><path d="M2.300 9l1.700-3 1.800 2.700z" fill="#0A2868"/></svg>
<svg style="left:598px;top:47px" width="16" height="16" viewBox="0 0 16 16"><path d="M5 15l3-9h6v9z" fill="#B0B0B0"/><path d="M8 6h6v9" fill="none" stroke="#888" stroke-width="1"/><ellipse cx="11" cy="14" rx="2.800" ry="1.500" fill="#F8C41C" stroke="#6A4000" stroke-width=".6"/><path d="M9.2 13.6h3.600" stroke="#FFF8C8" stroke-width=".8"/><ellipse cx="11" cy="12" rx="2.800" ry="1.500" fill="#F8C41C" stroke="#6A4000" stroke-width=".6"/><path d="M9.2 11.6h3.600" stroke="#FFF8C8" stroke-width=".8"/><ellipse cx="11" cy="10" rx="2.800" ry="1.500" fill="#F8C41C" stroke="#6A4000" stroke-width=".6"/><path d="M9.2 9.6h3.600" stroke="#FFF8C8" stroke-width=".8"/><ellipse cx="11" cy="8" rx="2.800" ry="1.500" fill="#F8C41C" stroke="#6A4000" stroke-width=".6"/><path d="M9.2 7.6h3.600" stroke="#FFF8C8" stroke-width=".8"/><rect x="1" y="3" width="8" height="2" fill="#10B810"/><rect x="4" y="0" width="2" height="8" fill="#10B810"/></svg>
<svg style="left:621px;top:47px" width="16" height="16" viewBox="0 0 16 16"><path d="M5 15l3-9h6v9z" fill="#B0B0B0"/><path d="M8 6h6v9" fill="none" stroke="#888" stroke-width="1"/><ellipse cx="11" cy="14" rx="2.800" ry="1.500" fill="#F8C41C" stroke="#6A4000" stroke-width=".6"/><path d="M9.2 13.6h3.600" stroke="#FFF8C8" stroke-width=".8"/><ellipse cx="11" cy="12" rx="2.800" ry="1.500" fill="#F8C41C" stroke="#6A4000" stroke-width=".6"/><path d="M9.2 11.6h3.600" stroke="#FFF8C8" stroke-width=".8"/><ellipse cx="11" cy="10" rx="2.800" ry="1.500" fill="#F8C41C" stroke="#6A4000" stroke-width=".6"/><path d="M9.2 9.6h3.600" stroke="#FFF8C8" stroke-width=".8"/><ellipse cx="11" cy="8" rx="2.800" ry="1.500" fill="#F8C41C" stroke="#6A4000" stroke-width=".6"/><path d="M9.2 7.6h3.600" stroke="#FFF8C8" stroke-width=".8"/><rect x="1" y="3" width="8" height="2" fill="#10B810"/></svg>
<svg style="left:644px;top:47px" width="16" height="16" viewBox="0 0 16 16"><path d="M3.5 0.5h6l3 3v9h-9z" fill="#fff" stroke="#3090E0" stroke-width="1"/><path d="M9.5 0.5v3h3" fill="#E8F2FC" stroke="#3090E0" stroke-width="1"/><rect x="5" y="6" width="6" height="1" fill="#28C0F0"/><rect x="5" y="8" width="6" height="1" fill="#28C0F0"/><path d="M8 7l2.500 2.500 4.500-5.500" fill="none" stroke="#10B010" stroke-width="2.4"/><ellipse cx="3.5" cy="14" rx="2.800" ry="1.500" fill="#F8C41C" stroke="#6A4000" stroke-width=".6"/><path d="M1.7 13.6h3.600" stroke="#FFF8C8" stroke-width=".8"/><ellipse cx="3.5" cy="12" rx="2.800" ry="1.500" fill="#F8C41C" stroke="#6A4000" stroke-width=".6"/><path d="M1.7 11.6h3.600" stroke="#FFF8C8" stroke-width=".8"/></svg>
<svg style="left:667px;top:47px" width="16" height="16" viewBox="0 0 16 16"><path d="M0.5 0.5h6l3 3v9h-9z" fill="#fff" stroke="#3090E0" stroke-width="1"/><path d="M6.5 0.5v3h3" fill="#E8F2FC" stroke="#3090E0" stroke-width="1"/><rect x="2" y="6" width="6" height="1" fill="#28C0F0"/><rect x="2" y="8" width="6" height="1" fill="#28C0F0"/><ellipse cx="5.5" cy="14.5" rx="2.800" ry="1.500" fill="#F8C41C" stroke="#6A4000" stroke-width=".6"/><path d="M3.7 14.1h3.600" stroke="#FFF8C8" stroke-width=".8"/><ellipse cx="5.5" cy="12.5" rx="2.800" ry="1.500" fill="#F8C41C" stroke="#6A4000" stroke-width=".6"/><path d="M3.7 12.1h3.600" stroke="#FFF8C8" stroke-width=".8"/><ellipse cx="5.5" cy="10.5" rx="2.800" ry="1.500" fill="#F8C41C" stroke="#6A4000" stroke-width=".6"/><path d="M3.7 10.1h3.600" stroke="#FFF8C8" stroke-width=".8"/><ellipse cx="5.5" cy="8.5" rx="2.800" ry="1.500" fill="#F8C41C" stroke="#6A4000" stroke-width=".6"/><path d="M3.7 8.1h3.600" stroke="#FFF8C8" stroke-width=".8"/><ellipse cx="5.5" cy="6.5" rx="2.800" ry="1.500" fill="#F8C41C" stroke="#6A4000" stroke-width=".6"/><path d="M3.7 6.1h3.600" stroke="#FFF8C8" stroke-width=".8"/><ellipse cx="12" cy="14.5" rx="2.800" ry="1.500" fill="#F8C41C" stroke="#6A4000" stroke-width=".6"/><path d="M10.2 14.1h3.600" stroke="#FFF8C8" stroke-width=".8"/><ellipse cx="12" cy="12.5" rx="2.800" ry="1.500" fill="#F8C41C" stroke="#6A4000" stroke-width=".6"/><path d="M10.2 12.1h3.600" stroke="#FFF8C8" stroke-width=".8"/></svg>
<svg style="left:690px;top:47px" width="16" height="16" viewBox="0 0 16 16"><path d="M0.5 0.5h6l3 3v8h-9z" fill="#fff" stroke="#3090E0" stroke-width="1"/><path d="M6.5 0.5v3h3" fill="#E8F2FC" stroke="#3090E0" stroke-width="1"/><rect x="2" y="6" width="6" height="1" fill="#28C0F0"/><rect x="2" y="8" width="6" height="1" fill="#28C0F0"/><path d="M5.500 15.500l9.500-9.500" stroke="#10A010" stroke-width="1.400"/><circle cx="7" cy="8.500" r="1.700" fill="#10A010"/><circle cx="13.500" cy="13.500" r="1.700" fill="#10A010"/></svg>
<svg style="left:713px;top:47px" width="16" height="16" viewBox="0 0 16 16"><path d="M0.5 0.5h6l3 3v8h-9z" fill="#fff" stroke="#3090E0" stroke-width="1"/><path d="M6.5 0.5v3h3" fill="#E8F2FC" stroke="#3090E0" stroke-width="1"/><rect x="2" y="6" width="6" height="1" fill="#28C0F0"/><rect x="2" y="8" width="6" height="1" fill="#28C0F0"/><g transform="translate(11.5 5) scale(0.9)"><path d="M-5 8v-3.500q0-2.500 2.500-2.500h5q2.500 0 2.500 2.500v3.500z" fill="#E02828"/><path d="M-5 8v-3.500q0-2.500 2.500-2.500h1l1.500 3.500 1.500-3.500h1q2.500 0 2.500 2.500v3.500" fill="none" stroke="#901010" stroke-width=".7"/><path d="M-1.800 1.800l1.800 2.700 1.800-2.700z" fill="#fff"/><rect x="-3.300" y="-1.500" width="6.600" height="2.600" rx="1.200" fill="#7A1A10"/><circle cy="-.2" r="2.300" fill="#FFD0A8"/><path d="M-2.500-.8q0-2.200 2.500-2.200t2.500 2.200q-2.500-1.200-5 0z" fill="#6A1A0A"/></g><g transform="translate(7.5 9) scale(1)"><path d="M-5 8v-3.500q0-2.500 2.500-2.500h5q2.500 0 2.500 2.500v3.500z" fill="#2040D8"/><path d="M-5 8v-3.500q0-2.500 2.500-2.500h1l1.500 3.500 1.500-3.500h1q2.500 0 2.500 2.500v3.500" fill="none" stroke="#102080" stroke-width=".7"/><path d="M-1.800 1.800l1.800 2.700 1.800-2.700z" fill="#fff"/><rect x="-3.300" y="-1.500" width="6.600" height="2.600" rx="1.200" fill="#7A1A10"/><circle cy="-.2" r="2.300" fill="#FFD0A8"/><path d="M-2.500-.8q0-2.200 2.500-2.200t2.500 2.200q-2.500-1.200-5 0z" fill="#6A1A0A"/></g></svg>
<svg style="left:736px;top:47px" width="16" height="16" viewBox="0 0 16 16"><rect x="2.500" y=".5" width="12" height="15" rx="2.500" fill="#40C040" stroke="#107010" stroke-width="1"/><rect x="3.500" y="1.500" width="10" height="13" rx="2" fill="none" stroke="#80E880" stroke-width="1"/><path d="M6.500 5v7.500h3M6.500 8.500h3" fill="none" stroke="#1848A0" stroke-width="1"/><rect x="5.500" y="3.500" width="3" height="2" fill="#70E070" stroke="#1848A0" stroke-width="1"/><rect x="9.500" y="7.500" width="3" height="2" fill="#70E070" stroke="#1848A0" stroke-width="1"/><rect x="9.500" y="11.500" width="3" height="2" fill="#70E070" stroke="#1848A0" stroke-width="1"/></svg>
<svg style="left:759px;top:60px" width="7" height="4" viewBox="0 0 7 4"><path d="M0 0h7l-3.500 3.600z" fill="#4A3508"/></svg>
<div class="a" style="left:774px;top:48px;width:3px;height:1px;background:#C2B894"></div>
<div class="a" style="left:774px;top:50px;width:3px;height:1px;background:#C2B894"></div>
<div class="a" style="left:774px;top:52px;width:3px;height:1px;background:#C2B894"></div>
<div class="a" style="left:774px;top:54px;width:3px;height:1px;background:#C2B894"></div>
<div class="a" style="left:774px;top:56px;width:3px;height:1px;background:#C2B894"></div>
<div class="a" style="left:774px;top:58px;width:3px;height:1px;background:#C2B894"></div>
<div class="a" style="left:774px;top:60px;width:3px;height:1px;background:#C2B894"></div>
<svg style="left:783px;top:47px" width="16" height="16" viewBox="0 0 16 16"><path d="M0.5 1.5h6l3 3v7h-9z" fill="#fff" stroke="#A0A0A0" stroke-width="1"/><rect x="0" y="12" width="10" height="1" fill="#444"/><rect x="1" y="13" width="10" height="1" fill="#CCC"/><path d="M6.5 4.5h-4l2 2.500-2 2.500h4" fill="none" stroke="#000" stroke-width="1"/><g transform="translate(11 4) scale(1)"><path d="M-5 8v-3.500q0-2.500 2.500-2.500h5q2.500 0 2.500 2.500v3.500z" fill="#2050E0"/><path d="M-5 8v-3.500q0-2.500 2.500-2.500h1l1.500 3.500 1.500-3.500h1q2.500 0 2.500 2.500v3.500" fill="none" stroke="#102890" stroke-width=".7"/><path d="M-1.800 1.800l1.800 2.700 1.800-2.700z" fill="#fff"/><rect x="-3.300" y="-1.500" width="6.600" height="2.600" rx="1.200" fill="#7A1A10"/><circle cy="-.2" r="2.300" fill="#FFD0A8"/><path d="M-2.500-.8q0-2.200 2.500-2.200t2.500 2.200q-2.500-1.200-5 0z" fill="#6A1A0A"/></g><rect x="8" y="11" width="5" height="5" fill="#F00000"/><path d="M8 11l2-2h5l-2 2z" fill="#FF5050"/><path d="M13 11l2-2v5l-2 2z" fill="#980000"/></svg>
<svg style="left:806px;top:47px" width="16" height="16" viewBox="0 0 16 16"><path d="M0.5 1.5h6l3 3v7h-9z" fill="#fff" stroke="#A0A0A0" stroke-width="1"/><rect x="0" y="12" width="10" height="1" fill="#444"/><rect x="1" y="13" width="10" height="1" fill="#CCC"/><path d="M6.5 4.5h-4l2 2.500-2 2.500h4" fill="none" stroke="#000" stroke-width="1"/><g transform="translate(11 4) scale(1)"><path d="M-5 8v-3.500q0-2.500 2.500-2.500h5q2.500 0 2.500 2.500v3.500z" fill="#F02030"/><path d="M-5 8v-3.500q0-2.500 2.500-2.500h1l1.500 3.500 1.500-3.500h1q2.500 0 2.500 2.500v3.500" fill="none" stroke="#900010" stroke-width=".7"/><path d="M-1.800 1.800l1.800 2.700 1.800-2.700z" fill="#fff"/><rect x="-3.300" y="-1.500" width="6.600" height="2.600" rx="1.200" fill="#7A1A10"/><circle cy="-.2" r="2.300" fill="#FFD0A8"/><path d="M-2.500-.8q0-2.200 2.500-2.200t2.500 2.200q-2.500-1.200-5 0z" fill="#6A1A0A"/></g><rect x="8" y="11" width="5" height="5" fill="#1020D8"/><path d="M8 11l2-2h5l-2 2z" fill="#5868FF"/><path d="M13 11l2-2v5l-2 2z" fill="#081080"/></svg>
<svg style="left:829px;top:47px" width="16" height="16" viewBox="0 0 16 16"><path d="M0.5 1.5h6l3 3v7h-9z" fill="#fff" stroke="#A0A0A0" stroke-width="1"/><rect x="0" y="12" width="10" height="1" fill="#444"/><rect x="1" y="13" width="10" height="1" fill="#CCC"/><path d="M6.5 4.5h-4l2 2.500-2 2.500h4" fill="none" stroke="#000" stroke-width="1"/><g transform="translate(12 5.5) scale(0.85)"><path d="M-5 8v-3.500q0-2.500 2.500-2.500h5q2.500 0 2.500 2.500v3.500z" fill="#2050E0"/><path d="M-5 8v-3.500q0-2.500 2.500-2.500h1l1.500 3.500 1.500-3.500h1q2.500 0 2.500 2.500v3.500" fill="none" stroke="#102890" stroke-width=".7"/><path d="M-1.800 1.800l1.800 2.700 1.800-2.700z" fill="#fff"/><rect x="-3.300" y="-1.500" width="6.600" height="2.600" rx="1.200" fill="#7A1A10"/><circle cy="-.2" r="2.300" fill="#FFD0A8"/><path d="M-2.500-.8q0-2.200 2.500-2.200t2.500 2.200q-2.500-1.200-5 0z" fill="#6A1A0A"/></g><g transform="translate(9 9) scale(1)"><path d="M-5 8v-3.500q0-2.500 2.500-2.500h5q2.500 0 2.500 2.500v3.500z" fill="#F02030"/><path d="M-5 8v-3.500q0-2.500 2.500-2.500h1l1.500 3.500 1.500-3.500h1q2.500 0 2.500 2.500v3.500" fill="none" stroke="#900010" stroke-width=".7"/><path d="M-1.800 1.800l1.800 2.700 1.800-2.700z" fill="#fff"/><rect x="-3.300" y="-1.500" width="6.600" height="2.600" rx="1.200" fill="#7A1A10"/><circle cy="-.2" r="2.300" fill="#FFD0A8"/><path d="M-2.500-.8q0-2.200 2.500-2.200t2.500 2.200q-2.500-1.200-5 0z" fill="#6A1A0A"/></g></svg>
<svg style="left:852px;top:47px" width="16" height="16" viewBox="0 0 16 16"><path d="M0.5 1.5h6l3 3v7h-9z" fill="#fff" stroke="#A0A0A0" stroke-width="1"/><rect x="0" y="12" width="10" height="1" fill="#444"/><rect x="1" y="13" width="10" height="1" fill="#CCC"/><path d="M6.5 4.5h-4l2 2.500-2 2.500h4" fill="none" stroke="#000" stroke-width="1"/><rect x="9" y="2" width="5" height="5" fill="#F00000"/><path d="M9 2l2-2h5l-2 2z" fill="#FF5050"/><path d="M14 2l2-2v5l-2 2z" fill="#980000"/><rect x="11" y="7" width="1" height="4" fill="#777"/><rect x="6" y="12" width="7" height="3" fill="#2018D8"/><path d="M6 12l2-2h7l-2 2z" fill="#4888F8"/><path d="M13 12l2-2v3l-2 2z" fill="#081060"/><rect x="7" y="13" width="1" height="1" fill="#FFE820"/><rect x="9" y="13" width="1" height="1" fill="#FFE820"/><rect x="11" y="13" width="1" height="1" fill="#FFE820"/></svg>
<svg style="left:875px;top:47px" width="16" height="16" viewBox="0 0 16 16"><path d="M0.5 1.5h6l3 3v7h-9z" fill="#fff" stroke="#A0A0A0" stroke-width="1"/><rect x="0" y="12" width="10" height="1" fill="#444"/><rect x="1" y="13" width="10" height="1" fill="#CCC"/><path d="M6.5 4.5h-4l2 2.500-2 2.500h4" fill="none" stroke="#000" stroke-width="1"/><rect x="9" y="2" width="5" height="5" fill="#F00000"/><path d="M9 2l2-2h5l-2 2z" fill="#FF5050"/><path d="M14 2l2-2v5l-2 2z" fill="#980000"/><rect x="10" y="7" width="1" height="4" fill="#777"/><path d="M6.500 11.500h6v4h-6z" fill="#F0A020" stroke="#6A3A00" stroke-width="1"/><rect x="8" y="13" width="3" height="1" fill="#6A3A00"/></svg>
<svg style="left:898px;top:47px" width="16" height="16" viewBox="0 0 16 16"><path d="M0.5 1.5h6l3 3v7h-9z" fill="#fff" stroke="#A0A0A0" stroke-width="1"/><rect x="0" y="12" width="10" height="1" fill="#444"/><rect x="1" y="13" width="10" height="1" fill="#CCC"/><path d="M6.5 4.5h-4l2 2.500-2 2.500h4" fill="none" stroke="#000" stroke-width="1"/><rect x="9" y="4" width="5" height="5" fill="#F00000"/><path d="M9 4l2-2h5l-2 2z" fill="#FF5050"/><path d="M14 4l2-2v5l-2 2z" fill="#980000"/><rect x="6" y="12" width="7" height="3" fill="#2878F8"/><path d="M6 12l2-2h7l-2 2z" fill="#60A8FF"/><path d="M13 12l2-2v3l-2 2z" fill="#0838A0"/><rect x="7" y="13" width="1" height="1" fill="#fff"/><rect x="9" y="13" width="1" height="1" fill="#fff"/><rect x="11" y="13" width="1" height="1" fill="#fff"/></svg>
<svg style="left:921px;top:47px" width="16" height="16" viewBox="0 0 16 16"><path d="M0.5 1.5h6l3 3v7h-9z" fill="#DDD" stroke="#A0A0A0" stroke-width="1"/><rect x="0" y="12" width="10" height="1" fill="#444"/><rect x="1" y="13" width="10" height="1" fill="#CCC"/><path d="M6.5 4.5h-4l2 2.500-2 2.500h4" fill="none" stroke="#000" stroke-width="1"/><rect x="7.500" y="4.500" width="7" height="11" fill="#E8E8E8" stroke="#444" stroke-width="1"/><rect x="9" y="6" width="4" height="1" fill="#444"/><rect x="9" y="8" width="4" height="1" fill="#444"/><rect x="9" y="10" width="4" height="1" fill="#444"/><rect x="9" y="12" width="4" height="1" fill="#444"/><rect x="9" y="14" width="4" height="1" fill="#444"/></svg>
<svg style="left:944px;top:47px" width="16" height="16" viewBox="0 0 16 16"><path d="M0.5 1.5h6l3 3v7h-9z" fill="#fff" stroke="#A0A0A0" stroke-width="1"/><rect x="0" y="12" width="10" height="1" fill="#444"/><rect x="1" y="13" width="10" height="1" fill="#CCC"/><path d="M6.5 4.5h-4l2 2.500-2 2.500h4" fill="none" stroke="#000" stroke-width="1"/><path d="M7 9.5l2.500 2.500 4.500-5.500" fill="none" stroke="#10B010" stroke-width="2.4"/></svg>
<svg style="left:966px;top:60px" width="7" height="4" viewBox="0 0 7 4"><path d="M0 0h7l-3.500 3.600z" fill="#4A3508"/></svg>
<div class="a" style="left:982px;top:48px;width:3px;height:1px;background:#C2B894"></div>
<div class="a" style="left:982px;top:50px;width:3px;height:1px;background:#C2B894"></div>
<div class="a" style="left:982px;top:52px;width:3px;height:1px;background:#C2B894"></div>
<div class="a" style="left:982px;top:54px;width:3px;height:1px;background:#C2B894"></div>
<div class="a" style="left:982px;top:56px;width:3px;height:1px;background:#C2B894"></div>
<div class="a" style="left:982px;top:58px;width:3px;height:1px;background:#C2B894"></div>
<div class="a" style="left:982px;top:60px;width:3px;height:1px;background:#C2B894"></div>
<svg style="left:991px;top:47px" width="16" height="16" viewBox="0 0 16 16"><rect x="2.5" y="1" width="11" height="14" fill="#F6EFC8" stroke="#8A7A40" stroke-width=".9"/><path d="M4 2.8h8v2h-8z" fill="#38B038"/><rect x="4.0" y="6.3" width="1.3" height="1.3" fill="#6A5A20"/><rect x="6.1" y="6.3" width="1.3" height="1.3" fill="#6A5A20"/><rect x="8.2" y="6.3" width="1.3" height="1.3" fill="#6A5A20"/><rect x="10.3" y="6.3" width="1.3" height="1.3" fill="#D03030"/><rect x="4.0" y="8.4" width="1.3" height="1.3" fill="#6A5A20"/><rect x="6.1" y="8.4" width="1.3" height="1.3" fill="#6A5A20"/><rect x="8.2" y="8.4" width="1.3" height="1.3" fill="#6A5A20"/><rect x="10.3" y="8.4" width="1.3" height="1.3" fill="#D03030"/><rect x="4.0" y="10.5" width="1.3" height="1.3" fill="#6A5A20"/><rect x="6.1" y="10.5" width="1.3" height="1.3" fill="#6A5A20"/><rect x="8.2" y="10.5" width="1.3" height="1.3" fill="#6A5A20"/><rect x="10.3" y="10.5" width="1.3" height="1.3" fill="#D03030"/><rect x="4.0" y="12.600000000000001" width="1.3" height="1.3" fill="#6A5A20"/><rect x="6.1" y="12.600000000000001" width="1.3" height="1.3" fill="#6A5A20"/><rect x="8.2" y="12.600000000000001" width="1.3" height="1.3" fill="#6A5A20"/><rect x="10.3" y="12.600000000000001" width="1.3" height="1.3" fill="#D03030"/></svg>
<svg style="left:1014px;top:47px" width="16" height="16" viewBox="0 0 16 16"><rect x="2" y="1.5" width="12" height="13.5" fill="#fff" stroke="#C89040" stroke-width=".9"/><path d="M2 1.5h12v3.2h-12z" fill="#F0B860"/><path d="M4.5 .8v2M8 .8v2M11.5 .8v2" stroke="#8A5A10" stroke-width="1"/><text x="8" y="13" font-family="Liberation Sans,sans-serif" font-size="8.5" text-anchor="middle" fill="#E02020">31</text></svg>
<svg style="left:1038px;top:47px" width="16" height="16" viewBox="0 0 16 16"><circle cx="6" cy="4" r="2.6" fill="#F0C090" stroke="#8A5A20" stroke-width=".6"/><path d="M3.6 3a2.6 2.6 0 0 1 4.8 0q-2.4-1.3-4.8 0z" fill="#C08020"/><path d="M1 13v-2.5q0-3 3-3h4q3 0 3 3v2.5z" fill="#3878D8" stroke="#1848A0" stroke-width=".6"/><path d="M9.8 10v-1.6a1.8 1.8 0 0 1 3.6 0v1.6" fill="none" stroke="#8A8AA0" stroke-width="1.1"/><rect x="8.8" y="10" width="5.6" height="4.6" fill="#E8E8F4" stroke="#667" stroke-width=".8"/></svg>
<div class="a" style="left:1059px;top:46px;width:1px;height:20px;background:#C9BFA0"></div>
<div class="a" style="left:1060px;top:46px;width:1px;height:20px;background:#FBF8F2"></div>
<div class="t" style="left:1068px;top:48.5px;font-size:12px;line-height:14px;color:#7A5A30;font-weight:bold;letter-spacing:-.3px">M</div>
<div class="t" style="left:1088px;top:48.5px;font-size:12px;line-height:14px;color:#7A5A30;font-weight:bold;letter-spacing:-.3px">M+</div>
<div class="t" style="left:1112px;top:48.5px;font-size:12px;line-height:14px;color:#7A5A30;font-weight:bold;letter-spacing:-.3px">M–</div>
<div class="a" style="left:1133px;top:46px;width:1px;height:20px;background:#C9BFA0"></div>
<div class="a" style="left:1134px;top:46px;width:1px;height:20px;background:#FBF8F2"></div>
<svg style="left:1139px;top:47px" width="16" height="16" viewBox="0 0 16 16"><path d="M4.500 .5q-2.500 1.500-2.500 4 0 2.500 3 4v5.500q0 1.500 1.500 1.500h3q1.500 0 1.500-1.500v-5.500q3-1.500 3-4 0-2.500-2.500-4v4.500h-7z" fill="#ECECF0" stroke="#707078" stroke-width="1"/><rect x="7" y="10" width="2" height="4" rx="1" fill="#EEE6DD" stroke="#707078" stroke-width=".8"/><path d="M6 9v5" stroke="#fff" stroke-width="1"/></svg>
<svg style="left:1162px;top:60px" width="7" height="4" viewBox="0 0 7 4"><path d="M0 0h7l-3.500 3.600z" fill="#4A3508"/></svg>
<div class="a" style="left:0px;top:68px;width:1896px;height:969px;background:#FFFBF0;border:solid;border-width:1px 1px 1px 1px;border-color:#9D9DA1 #fff #fff #9D9DA1"></div>
<div class="a" style="left:0px;top:69px;width:1895px;height:1px;background:#69696F"></div>
<div class="a" style="left:1px;top:69px;width:1px;height:967px;background:#69696F"></div>
<div class="a" style="left:2px;top:1035px;width:1894px;height:1px;background:#F4F0EA"></div>
<div class="a" style="left:168px;top:70px;width:5px;height:965px;background:#FFFCF5;border-left:1px solid #F3EDDC;border-right:1px solid #F3EDDC"></div>
<div class="a" style="left:1657px;top:70px;width:5px;height:965px;background:#FFFCF5;border-left:1px solid #F3EDDC;border-right:1px solid #F3EDDC"></div>
<svg style="left:11px;top:125px" width="18" height="18" viewBox="0 0 18 18"><path d="M0 0h18l-2.500 5.500 1.500 1.500-2 4.500 1.500 1.500-5.500 5h-11v-5l2-2-2-2.500z" fill="#9C2B2B"/><g transform="translate(12.300 6.200)"><rect x="-1.100" y="-5.200" width="2.200" height="3" fill="#fff" transform="rotate(10)"/><rect x="-1.100" y="-5.200" width="2.200" height="3" fill="#fff" transform="rotate(55)"/><rect x="-1.100" y="-5.200" width="2.200" height="3" fill="#fff" transform="rotate(100)"/><rect x="-1.100" y="-5.200" width="2.200" height="3" fill="#fff" transform="rotate(145)"/><rect x="-1.100" y="-5.200" width="2.200" height="3" fill="#fff" transform="rotate(190)"/><rect x="-1.100" y="-5.200" width="2.200" height="3" fill="#fff" transform="rotate(235)"/><rect x="-1.100" y="-5.200" width="2.200" height="3" fill="#fff" transform="rotate(280)"/><rect x="-1.100" y="-5.200" width="2.200" height="3" fill="#fff" transform="rotate(325)"/><circle r="3.400" fill="#fff"/><circle r="1.500" fill="#9C2B2B"/></g><g transform="translate(3 9.500)"><rect x="-.9" y="-4.200" width="1.800" height="2.400" fill="#fff" transform="rotate(0)"/><rect x="-.9" y="-4.200" width="1.800" height="2.400" fill="#fff" transform="rotate(45)"/><rect x="-.9" y="-4.200" width="1.800" height="2.400" fill="#fff" transform="rotate(90)"/><rect x="-.9" y="-4.200" width="1.800" height="2.400" fill="#fff" transform="rotate(135)"/><rect x="-.9" y="-4.200" width="1.800" height="2.400" fill="#fff" transform="rotate(180)"/><rect x="-.9" y="-4.200" width="1.800" height="2.400" fill="#fff" transform="rotate(225)"/><rect x="-.9" y="-4.200" width="1.800" height="2.400" fill="#fff" transform="rotate(270)"/><rect x="-.9" y="-4.200" width="1.800" height="2.400" fill="#fff" transform="rotate(315)"/><circle r="2.600" fill="#fff"/><circle r="1.200" fill="#9C2B2B"/></g><rect x="0" y="4" width="1.500" height="11" fill="#FFFBF0"/><path d="M0 4l3 5.500-3 5.500z" fill="#9C2B2B"/><rect x="16" y="16" width="2" height="2" fill="#9C2B2B"/></svg>
<div class="t" style="left:32px;top:119.7px;font-size:27.600px;line-height:30px;font-weight:bold;letter-spacing:-.5px;word-spacing:3px;transform-origin:0 50%;transform:scaleX(.487);color:#0A0A0A">АВТОСЕРВИС <span style="color:#9C2B2B">ПРО</span></div>
<div class="a" style="left:5px;top:201px;width:158px;height:1px;background:#B9B086"></div>
<div class="a" style="left:5px;top:203px;width:158px;height:1px;background:#B9B086"></div>
<div class="a" style="left:5px;top:254px;width:158px;height:1px;background:#B9B086"></div>
<div class="a" style="left:5px;top:292px;width:158px;height:1px;background:#B9B086"></div>
<div class="a" style="left:5px;top:330px;width:158px;height:1px;background:#B9B086"></div>
<div class="a" style="left:5px;top:369px;width:158px;height:1px;background:#B9B086"></div>
<div class="a" style="left:5px;top:406px;width:158px;height:1px;background:#B9B086"></div>
<div class="a" style="left:5px;top:445px;width:158px;height:1px;background:#B9B086"></div>
<div class="a" style="left:5px;top:483px;width:158px;height:1px;background:#B9B086"></div>
<div class="a" style="left:5px;top:531px;width:158px;height:1px;background:#B9B086"></div>
<div class="a" style="left:5px;top:533px;width:158px;height:1px;background:#B9B086"></div>
<div class="t" style="left:26px;top:221px;font-size:14px;line-height:16px;color:#43340A;width:150px;text-align:center;text-decoration:underline;letter-spacing:.15px">В заказ-наряд</div>
<svg style="left:11px;top:210px" width="30" height="38" viewBox="0 0 30 38"><rect x=".8" y="4.800" width="23.500" height="31.500" fill="#FFFDF4" stroke="#F8CC58" stroke-width="1.600"/><rect x="3" y="7" width="19" height="27" fill="none" stroke="#FBE6A0" stroke-width="1.200"/><path d="M6 14h10M6 18h8M6 22h12M6 26h6" stroke="#A09068" stroke-width="1.700"/><path d="M16 1.500q10.500-2 11 9.500l1.500-.5-4.500 8.500-6.500-6 2.800-.3q.2-5.500-4.800-6z" fill="#18A818"/><path d="M17.500 3.500q7-1 8 6.500" fill="none" stroke="#60D060" stroke-width="1"/></svg>
<div class="t" style="left:23px;top:265px;font-size:14px;line-height:16px;color:#43340A;width:150px;text-align:center;text-decoration:underline;letter-spacing:.15px">Заказ-наряды</div>
<svg style="left:11px;top:259px" width="24" height="28" viewBox="0 0 24 28"><rect x="0.8" y="0.8" width="10" height="12" fill="#FFFDF4" stroke="#F8D060" stroke-width="1.500"/><path d="M3 4.5h5M3 6.5h4M3 8.5h5" fill="none" stroke="#A09878" stroke-width="1"/><rect x="13.3" y="0.8" width="10" height="12" fill="#FFFDF4" stroke="#F8D060" stroke-width="1.500"/><path d="M15.5 4.5h5M15.5 6.5h4M15.5 8.5h5" fill="none" stroke="#A09878" stroke-width="1"/><rect x="0.8" y="15.3" width="10" height="12" fill="#FFFDF4" stroke="#F8D060" stroke-width="1.500"/><path d="M3 18.5h5M3 20.5h4M3 22.5h5" fill="none" stroke="#A09878" stroke-width="1"/><rect x="13.3" y="15.3" width="10" height="12" fill="#FFFDF4" stroke="#F8D060" stroke-width="1.500"/><path d="M15.5 18.5h5M15.5 20.5h4M15.5 22.5h5" fill="none" stroke="#A09878" stroke-width="1"/></svg>
<div class="t" style="left:27px;top:305px;font-size:14px;line-height:16px;color:#43340A;width:150px;text-align:center;text-decoration:underline;letter-spacing:.15px">Журнал СТО</div>
<svg style="left:11px;top:298px" width="32" height="30" viewBox="0 0 32 30"><defs><linearGradient id="gMet" x1="0" y1="0" x2="1" y2="1"><stop offset="0" stop-color="#D8DADE"/><stop offset=".5" stop-color="#8E9098"/><stop offset="1" stop-color="#5E6068"/></linearGradient></defs><path d="M20.500 10.500l-8.500 10" stroke="#A8AAB0" stroke-width="3.400"/><path d="M10 19.800l-5.300 6.700" stroke="#D21A1E" stroke-width="6.400" stroke-linecap="round"/><path d="M8.300 19.200l-5 6.300" stroke="#E85A5E" stroke-width="1" stroke-linecap="round"/><path d="M16 .4Q24.500 1.500 29.500 7.800L32 11.700 28.300 15.700 26.200 13.500Q24 12 22.100 12.200L19.300 10Q21.500 5 16 .4z" fill="url(#gMet)" stroke="#6A6C74" stroke-width=".6"/><path d="M18.500 2q5 1.500 9 6" fill="none" stroke="#E4E6EA" stroke-width="1"/><path d="M11 11l7 7" stroke="#9A9CA4" stroke-width="4"/><path d="M19 19.500l5.500 6.500" stroke="#A4A6AE" stroke-width="6.600" stroke-linecap="round"/><path d="M19.500 18.500l5.500 6.500" stroke="#D8DADE" stroke-width="1.600" stroke-linecap="round"/><ellipse cx="24.300" cy="25.800" rx="2.600" ry="1.600" transform="rotate(50 24.300 25.800)" fill="#FFFFFF" stroke="#8A8C94" stroke-width=".5"/><path d="M6 .8q5.500 1.300 5.700 6.500-.4 5-5.700 5.600-5 .1-5.800-4.900l3.200 2.300q3.800.2 4.400-3 .2-3.200-2.900-4.500z" fill="url(#gMet)" stroke="#55575F" stroke-width=".6"/><circle cx="14.200" cy="15.700" r="6.300" fill="#FAFCFF" stroke="#3CB03C" stroke-width="1.500"/><path d="M14.200 11v4.700" stroke="#8AA0C0" stroke-width="1"/><path d="M10 15.700h1M18.400 15.700h-1M14.200 20v-1M11.200 12.700l.7.7M17.200 12.700l-.7.7M11.200 18.700l.7-.7M17.200 18.700l-.7-.7" stroke="#B8C8E0" stroke-width=".8"/></svg>
<div class="t" style="left:25px;top:343px;font-size:14px;line-height:16px;color:#43340A;width:150px;text-align:center;text-decoration:underline;letter-spacing:.15px">Товары</div>
<svg style="left:11px;top:337px" width="27" height="28" viewBox="0 0 27 28"><rect x=".8" y=".8" width="20" height="23" fill="#FFFDF6" stroke="#F8CC58" stroke-width="1.600"/><path d="M4.500 4.500h6M4.500 6.500h5" stroke="#B8B4A8" stroke-width=".8"/><path d="M5.500 17.500l10.500-9.500M8.500 19l10-9" stroke="#5E6066" stroke-width="2.200"/><path d="M13 10.200l3.500-3.200M16 11.800l3.300-3" stroke="#F0C860" stroke-width="2.400"/><path d="M3.500 19.300l3-2.700M6.500 20.800l3-2.700" stroke="#F0A818" stroke-width="2.800"/><circle cx="20" cy="21.800" r="5" fill="#FAFCFF" stroke="#3CB03C" stroke-width="1.300"/><path d="M20 18.300v3.700" stroke="#8AA0C0" stroke-width="1"/><path d="M16.800 21.800h.8M23.200 21.800h-.8M20 25v-.8" stroke="#B8C8E0" stroke-width=".8"/></svg>
<div class="t" style="left:25.5px;top:381px;font-size:14px;line-height:16px;color:#43340A;width:150px;text-align:center;text-decoration:underline;letter-spacing:.15px">Работы</div>
<svg style="left:11px;top:377px" width="27" height="25" viewBox="0 0 27 25"><g transform="scale(0.6842105263157895 0.7058823529411765)"><path d="M0 34v-7q0-7 8-8h6q6 1 7 8v7z" fill="#E02020"/><path d="M4 14q-2-13 7-13t8 13l-2 6h-11z" fill="#1A1A1A"/><ellipse cx="11" cy="10.500" rx="5" ry="6" fill="#FAD8B0"/><path d="M5.500 9q1-6 6-5.500 4 .5 5 4.500-6 .5-8-2.500-1 3-3 3.500z" fill="#1A1A1A"/><path d="M13 34v-8q0-7 7-8h9q8 1 8 8v8z" fill="#E81C1C" stroke="#fff" stroke-width="1.200"/><ellipse cx="25" cy="10.500" rx="6" ry="7" fill="#FAD8B0"/><path d="M18.500 10q-1-9 6.500-9.500 7.500.5 6.500 9.500-2-5-6.500-5-5 0-6.500 5z" fill="#1A1A1A"/><path d="M21 18l4 5 4-5z" fill="#FAD8B0"/><rect x="28" y="27" width="5" height="2.200" fill="#fff"/></g></svg>
<div class="t" style="left:24.5px;top:419px;font-size:14px;line-height:16px;color:#43340A;width:150px;text-align:center;text-decoration:underline;letter-spacing:.15px">Документы</div>
<svg style="left:11px;top:414px" width="24" height="27" viewBox="0 0 24 27"><path d="M5 3l14-2 2 22-15 2z" fill="#FBF3D8" stroke="#E8D8A0" stroke-width=".8"/><path d="M3 2h13l4 4v19h-17z" fill="#FBFBFB" stroke="#D0D0D0" stroke-width=".9"/><rect x="0" y="9.500" width="20" height="8" rx="1.500" fill="#707078"/><text x="10" y="16" font-family="Liberation Sans,sans-serif" font-size="6.500" font-weight="bold" fill="#fff" text-anchor="middle">DOC</text></svg>
<div class="t" style="left:21.5px;top:458px;font-size:14px;line-height:16px;color:#43340A;width:150px;text-align:center;text-decoration:underline;letter-spacing:.15px">Отчеты</div>
<svg style="left:11px;top:453px" width="21" height="28" viewBox="0 0 21 28"><path d="M1 1h12l6 6v19h-18z" fill="#FAFAFA" stroke="#D4D4D4" stroke-width="1"/><path d="M13 1v6h6" fill="#EEE" stroke="#D4D4D4" stroke-width=".8"/><circle cx="9.500" cy="15" r="5.500" fill="#D03028"/><path d="M9.500 15v-5.500a5.500 5.500 0 0 1 5.200 7.300z" fill="#F0C030"/><path d="M9.500 15l5.200 1.800a5.500 5.500 0 0 1-7 3.300z" fill="#48A838"/></svg>
<div class="t" style="left:29.5px;top:491px;font-size:14px;line-height:16px;color:#43340A;width:150px;text-align:center;text-decoration:underline;letter-spacing:.15px">Задачи</div>
<svg style="left:11px;top:491px" width="26" height="35" viewBox="0 0 26 35"><path d="M1 1h16l8 8v25h-24z" fill="#FAFAFA" stroke="#D8D8D8" stroke-width="1"/><path d="M17 1v8h8" fill="#EEE" stroke="#D8D8D8" stroke-width=".8"/><rect x="3" y="10" width="5" height="5" fill="#fff" stroke="#E8A030" stroke-width="1"/><path d="M4 12.5l1.500 1.500 2.500-3.500" fill="none" stroke="#D02020" stroke-width="1.300"/><path d="M11 11.5h11M11 14.5h11" stroke="#D0D0D0" stroke-width="1"/><rect x="3" y="18" width="5" height="5" fill="#fff" stroke="#E8A030" stroke-width="1"/><path d="M4 20.5l1.500 1.500 2.500-3.500" fill="none" stroke="#D02020" stroke-width="1.300"/><path d="M11 19.5h11M11 22.5h11" stroke="#D0D0D0" stroke-width="1"/><rect x="3" y="26" width="5" height="5" fill="#fff" stroke="#E8A030" stroke-width="1"/><path d="M4 28.5l1.500 1.500 2.500-3.500" fill="none" stroke="#D02020" stroke-width="1.300"/><path d="M11 27.5h11M11 30.5h11" stroke="#D0D0D0" stroke-width="1"/></svg>
<div class="t" style="left:88.5px;top:511.2px;font-size:13px;line-height:15px;color:#8B1A1A;letter-spacing:-0.306px;">20/37</div>
<div class="t" style="left:5px;top:977px;color:#000080;">Откр.: 2 875 773 р.</div>
<div class="t" style="left:5px;top:994px;color:#008000;">Закр.: 0 р.</div>
<div class="a btn" style="left:137px;top:975px;width:25px;height:15px;"></div>
<svg style="left:142px;top:977px" width="15" height="11" viewBox="0 0 15 11"><g transform="scale(1.07143 0.916667)"><path d="M3.800 2.600a4.700 4.700 0 0 1 7.900 3.200" fill="none" stroke="#2E8B2E" stroke-width="1.400"/><path d="M10.200 9.400a4.700 4.700 0 0 1-7.900-3.200" fill="none" stroke="#2E8B2E" stroke-width="1.400"/><path d="M9 5.500h5.200l-2.600 3.900z" fill="#2E8B2E"/><path d="M5 6.500h-5.200l2.600-3.900z" fill="#2E8B2E"/></g></svg>
<div class="a btn" style="left:137px;top:992px;width:25px;height:15px;"></div>
<svg style="left:142px;top:993px" width="15" height="13" viewBox="0 0 15 13"><rect x=".5" y=".5" width="11" height="12" fill="#fff" stroke="#C8D4E4" stroke-width=".8"/><path d="M4 .5v12M8 .5v12M.5 4h11M.5 8h11" stroke="#D4DEEC" stroke-width=".7"/><path d="M1 12.500q1-8 10.500-11" fill="none" stroke="#2E8B2E" stroke-width="1.300"/><path d="M5 9.500h4v3.500h-4z" fill="#F0A820"/><path d="M10 7h3.500v6h-3.500z" fill="#3A6ED8"/><path d="M11 7v6" stroke="#8AB0F0" stroke-width=".8"/></svg>
<div class="a btn" style="left:5px;top:1012px;width:157px;height:20px;"></div>
<svg style="left:11px;top:1017px" width="10" height="10" viewBox="0 0 10 10"><path d="M1.200 1.200l7.300 7.300M8.500 1.200l-7.300 7.300" stroke="#3A80C0" stroke-width="2.600" stroke-linecap="round"/><path d="M1.200 1.200l7.300 7.300" stroke="#7AB4E4" stroke-width=".8" stroke-linecap="round"/></svg>
<div class="t" style="left:25px;top:1015.5px;color:#43340A;width:137px;text-align:center;">Выход</div>
<div class="a" style="left:181px;top:76px;width:1468px;height:59px;border:1px solid #B9B086"></div>
<div class="a" style="left:189px;top:91px;width:730px;height:32px;border:1px solid #B9B086"></div>
<div class="t" style="left:197px;top:84.5px;color:#43340A;background:#FFFBF0;padding:0 2px">Поиск по автомобилю</div>
<div class="a" style="left:198px;top:99px;width:697px;height:19px;background:#F6E68E;border:1px solid #D6C98A"></div>
<div class="a btg" style="left:894px;top:99px;width:16px;height:19px;"></div>
<svg style="left:898px;top:105px" width="8" height="7" viewBox="0 0 8 7"><path d="M1 .8l6 5.600M7 .8l-6 5.600" stroke="#6A4A10" stroke-width="1.400"/></svg>
<div class="a" style="left:926px;top:90px;width:716px;height:32px;border:1px solid #B9B086"></div>
<div class="t" style="left:934px;top:83.5px;color:#43340A;background:#FFFBF0;padding:0 2px">Поиск по контрагенту \ по штрихкоду</div>
<div class="a" style="left:935px;top:98px;width:651px;height:19px;background:#F6E68E;border:1px solid #D6C98A"></div>
<div class="a btg" style="left:1585px;top:98px;width:16px;height:19px;"></div>
<svg style="left:1589px;top:104px" width="8" height="7" viewBox="0 0 8 7"><path d="M1 .8l6 5.600M7 .8l-6 5.600" stroke="#6A4A10" stroke-width="1.400"/></svg>
<div class="a btn" style="left:1608px;top:98px;width:25px;height:19px;"></div>
<svg style="left:1612px;top:99px" width="18" height="17" viewBox="0 0 18 17"><circle cx="11.500" cy="6.500" r="5" fill="#F4FAFF" stroke="#8A98A8" stroke-width="1.300"/><path d="M8 10.500l-5.500 5.500" stroke="#8A8A8A" stroke-width="2.400" stroke-linecap="round"/><path d="M8.800 5.500a3 3 0 0 1 3-2" fill="none" stroke="#fff" stroke-width="1.200"/></svg>
<div class="a" style="left:181px;top:139px;width:1409px;height:51px;border:1px solid #B9B086;background:#FFFDF9"></div>
<div class="a" style="left:1595px;top:139px;width:54px;height:51px;border:1px solid #B9B086;background:#FFFDF9"></div>
<svg style="left:218px;top:145px" width="37" height="37" viewBox="0 0 37 37"><defs><linearGradient id="gGear" x1="0" y1="0" x2="0" y2="1"><stop offset="0" stop-color="#9A9A9A"/><stop offset="1" stop-color="#2E2E2E"/></linearGradient><linearGradient id="gPen" x1="0" y1="0" x2="1" y2="1"><stop offset="0" stop-color="#8CD860"/><stop offset="1" stop-color="#2A8A2A"/></linearGradient><linearGradient id="gGold" x1="0" y1="0" x2="1" y2="0"><stop offset="0" stop-color="#FFF0A0"/><stop offset=".5" stop-color="#F8C020"/><stop offset="1" stop-color="#E09810"/></linearGradient></defs><g transform="rotate(42 18.500 18.500)"><rect x="14" y="-4" width="9" height="10" rx="1.500" fill="url(#gGold)"/><path d="M14 -1h9M14 2h9" stroke="#FFF8D0" stroke-width="1"/><rect x="17" y="6" width="3" height="9" fill="#AAA"/><path d="M14.500 7l8 2-8 2 8 2-8 2" fill="none" stroke="#333" stroke-width="1.200"/><rect x="13" y="26" width="11" height="4" rx="1" fill="url(#gGold)"/><rect x="14" y="30" width="9" height="4" rx="1" fill="url(#gGold)"/><rect x="13" y="34" width="11" height="4" rx="1" fill="url(#gGold)"/><rect x="15" y="38" width="7" height="3" fill="#E8B020"/></g><path d="M9 10l19 19" stroke="#C4C6CA" stroke-width="5.500" stroke-linecap="round"/><path d="M9 9l18 18" stroke="#E8EAEC" stroke-width="1.500"/><path d="M.8 9.500q-1.500-6 5-8.500l1 5 4-.5-.5-5q6 1.500 5.500 7.500-1.500 5-7.500 5.500-5 0-7.500-4z" fill="#6A6C72" stroke="#3E4046" stroke-width=".7"/><ellipse cx="27" cy="28" rx="2.800" ry="1.500" transform="rotate(45 27 28)" fill="#FFFDF9" stroke="#777" stroke-width=".7"/><circle cx="19" cy="20.5" r="7.6" fill="#58B428"/><circle cx="19" cy="18.828" r="5.928" fill="#8CD85C" opacity=".75"/><circle cx="19" cy="16.7" r="1.292" fill="#fff"/><rect x="17.86" y="18.98" width="2.432" height="5.928" fill="#fff"/><rect x="16.72" y="18.98" width="2.28" height="1.3679999999999999" fill="#fff"/><rect x="16.72" y="23.844" width="4.712" height="1.216" fill="#fff"/></svg>
<svg style="left:314px;top:147px" width="45" height="37" viewBox="0 0 45 37"><g transform="translate(18.500 18.500)"><rect x="-4" y="-17.500" width="8" height="9" rx="1" fill="url(#gGear)" transform="rotate(0)"/><rect x="-4" y="-17.500" width="8" height="9" rx="1" fill="url(#gGear)" transform="rotate(45)"/><rect x="-4" y="-17.500" width="8" height="9" rx="1" fill="url(#gGear)" transform="rotate(90)"/><rect x="-4" y="-17.500" width="8" height="9" rx="1" fill="url(#gGear)" transform="rotate(135)"/><rect x="-4" y="-17.500" width="8" height="9" rx="1" fill="url(#gGear)" transform="rotate(180)"/><rect x="-4" y="-17.500" width="8" height="9" rx="1" fill="url(#gGear)" transform="rotate(225)"/><rect x="-4" y="-17.500" width="8" height="9" rx="1" fill="url(#gGear)" transform="rotate(270)"/><rect x="-4" y="-17.500" width="8" height="9" rx="1" fill="url(#gGear)" transform="rotate(315)"/><circle r="13.500" fill="url(#gGear)"/><circle r="10.800" fill="#3AA63A"/><circle r="8.800" fill="#F6F8F6"/><circle r="8.800" fill="none" stroke="#C8D0C8" stroke-width=".8"/><path d="M0-7.500v7.500" stroke="#333" stroke-width="1.300"/><path d="M-7 0h1.500M7 0h-1.500M0 7.500v-1.500M-5-5l1 1M5-5l-1 1M-5 5l1-1" stroke="#666" stroke-width="1"/></g><path d="M41 .5l3 3.500-19 22-6 2.500 2-6z" fill="url(#gPen)" stroke="#1A6A1A" stroke-width=".7"/><path d="M41 .5l3 3.500-1.500 1.700-3.200-3.500z" fill="#F0D070"/><path d="M31.500 11.500l3.200 3.600" stroke="#F0D070" stroke-width="1.800"/><path d="M19 28.500l2-6 4 3.500z" fill="#F4E8C0"/><path d="M19 28.500l.8-2.500 1.600 1.500z" fill="#333"/><path d="M40 3l-17 20" stroke="#C8F0A0" stroke-width="1.200" opacity=".8"/></svg>
<svg style="left:417px;top:147px" width="38" height="34" viewBox="0 0 38 34"><g transform="scale(1.0 1.0)"><path d="M0 34v-7q0-7 8-8h6q6 1 7 8v7z" fill="#E02020"/><path d="M4 14q-2-13 7-13t8 13l-2 6h-11z" fill="#1A1A1A"/><ellipse cx="11" cy="10.500" rx="5" ry="6" fill="#FAD8B0"/><path d="M5.500 9q1-6 6-5.500 4 .5 5 4.500-6 .5-8-2.500-1 3-3 3.500z" fill="#1A1A1A"/><path d="M13 34v-8q0-7 7-8h9q8 1 8 8v8z" fill="#E81C1C" stroke="#fff" stroke-width="1.200"/><ellipse cx="25" cy="10.500" rx="6" ry="7" fill="#FAD8B0"/><path d="M18.500 10q-1-9 6.500-9.500 7.500.5 6.500 9.500-2-5-6.500-5-5 0-6.500 5z" fill="#1A1A1A"/><path d="M21 18l4 5 4-5z" fill="#FAD8B0"/><rect x="28" y="27" width="5" height="2.200" fill="#fff"/></g></svg>
<svg style="left:513px;top:146px" width="44" height="32" viewBox="0 0 44 32"><defs><linearGradient id="gChk" x1="0" y1="0" x2="0" y2="1"><stop offset="0" stop-color="#6CC038"/><stop offset="1" stop-color="#2A8410"/></linearGradient><linearGradient id="gCar" x1="0" y1="0" x2="0" y2="1"><stop offset="0" stop-color="#F83030"/><stop offset="1" stop-color="#D00808"/></linearGradient><linearGradient id="gSuit" x1="0" y1="0" x2="0" y2="1"><stop offset="0" stop-color="#D4D4D4"/><stop offset="1" stop-color="#808080"/></linearGradient></defs><g transform="translate(14.200 15.600)"><path d="M-1.200 -5.500l-.6 -9.5h3.600l-.6 9.5z" fill="#F8BE20" transform="rotate(-8)"/><path d="M-1.200 -5.500l-.6 -9.5h3.600l-.6 9.5z" fill="#F8BE20" transform="rotate(37)"/><path d="M-1.200 -5.500l-.6 -9h3.600l-.6 9z" fill="#F8BE20" transform="rotate(82)"/><path d="M-1.200 -5.500l-.6 -4.5h3.600l-.6 4.5z" fill="#F8BE20" transform="rotate(127)"/><path d="M-1.200 -5.500l-.6 -9.5h3.600l-.6 9.5z" fill="#F8BE20" transform="rotate(172)"/><path d="M-1.200 -5.500l-.6 -9.5h3.600l-.6 9.5z" fill="#F8BE20" transform="rotate(217)"/><path d="M-1.200 -5.500l-.6 -9h3.600l-.6 9z" fill="#F8BE20" transform="rotate(262)"/><path d="M-1.200 -5.500l-.6 -9h3.600l-.6 9z" fill="#F8BE20" transform="rotate(307)"/><circle r="4.600" fill="#FFFDF9" stroke="#F8D070" stroke-width=".8"/></g><path d="M26.400 23l4.800 5.300 10-10.800" fill="none" stroke="url(#gChk)" stroke-width="4"/></svg>
<svg style="left:619px;top:146px" width="44" height="34" viewBox="0 0 44 34"><path d="M1 29v-7q0-3 3-4l3.500-4.500q1-1.500 3-1.500h12q2 0 3 1.500l3 5v10.500z" fill="url(#gCar)"/><path d="M7.500 17.500l3-4.500h11l2.500 4.500z" fill="#ECECF0"/><path d="M1 25.500h27v4h-27z" fill="#B80C0C"/><path d="M5 28h20" stroke="#300" stroke-width="1.200"/><ellipse cx="4.500" cy="21.500" rx="2.600" ry="1.700" fill="#E8F8FF" stroke="#fff" stroke-width=".5"/><rect x="1.500" y="29.500" width="4.500" height="4" rx="1.200" fill="#111"/><path d="M19 33.500v-9q0-6.500 6-6.500h12q6.300 0 6.300 6.500v9z" fill="url(#gSuit)"/><path d="M26.500 18h9l-4.500 7z" fill="#fff"/><path d="M30 19h2l1.600 8.500-2.600 3.500-2.600-3.500z" fill="#D81818"/><circle cx="31" cy="9.200" r="8" fill="#FFE2B4"/><path d="M23.100 8.200a8 8 0 0 1 15.600-1.500q-4-3-8.500-1.800-4 1-7.100 3.300z" fill="#2E2E2E"/></svg>
<svg style="left:721px;top:151px" width="36" height="26" viewBox="0 0 36 26"><path d="M2.400 1.400v22h32" fill="none" stroke="#C6C6C6" stroke-width="3"/><path d="M6.700 18.200l8.100-15.300 9.500 8 8.700-8.800" fill="none" stroke="#DA1E1E" stroke-width="4.600" stroke-linejoin="round" stroke-linecap="round"/><path d="M11.800 17.500l4.400-3.700 8.100 4.400 8.700-3.700" fill="none" stroke="#4CA818" stroke-width="4.200" stroke-linejoin="round" stroke-linecap="round"/></svg>
<svg style="left:825px;top:145px" width="43" height="38" viewBox="0 0 43 38"><rect x="0" y="0" width="43" height="38" fill="#fff"/><path d="M9 9q5-7 13-5 8-4 15 2l-2 14h-22z" fill="#9EA0A6"/><path d="M11 10q3-5 8-4l2 6-6 4zM24 3l3-2 1 5zM33 5l3-2v6z" fill="#D8DADE"/><path d="M14 14l5-6M17 16l4-5" stroke="#686A70" stroke-width="1.200"/><path d="M21 7q9-4 13 6l-4.500 4q-3-7-8.500-5z" fill="#CC1C1C"/><path d="M30 11l3-2" stroke="#7A0C0C" stroke-width="1.300"/><path d="M5 19l16 5v14l-14-6z" fill="#D6A85C"/><path d="M21 24l17-7v14l-17 7z" fill="#B88A44"/><path d="M5 19l-3.500 1.500 14.500 6 5-2.500zM38 17l4-1.500-17 8.500-4 0z" fill="#E6C484"/><path d="M5 19l3-5 13 4 0 6z" fill="#C89A50" opacity=".85"/><path d="M21 24v-6l13-4 4 3z" fill="#A87C3C" opacity=".85"/><path d="M28 24.500l5-2v2.500l-5 2z" fill="#555"/><path d="M24 32l2-1v2l-2 1zM28 30l2-1v2l-2 1z" fill="#6A4A20"/></svg>
<svg style="left:930px;top:146px" width="40" height="35" viewBox="0 0 40 35"><g transform="scale(1.220 1.150)"><defs><linearGradient id="gMet" x1="0" y1="0" x2="1" y2="1"><stop offset="0" stop-color="#D8DADE"/><stop offset=".5" stop-color="#8E9098"/><stop offset="1" stop-color="#5E6068"/></linearGradient></defs><path d="M20.500 10.500l-8.500 10" stroke="#A8AAB0" stroke-width="3.400"/><path d="M10 19.800l-5.300 6.700" stroke="#D21A1E" stroke-width="6.400" stroke-linecap="round"/><path d="M8.300 19.200l-5 6.300" stroke="#E85A5E" stroke-width="1" stroke-linecap="round"/><path d="M16 .4Q24.500 1.500 29.500 7.800L32 11.700 28.300 15.700 26.200 13.500Q24 12 22.100 12.200L19.300 10Q21.500 5 16 .4z" fill="url(#gMet)" stroke="#6A6C74" stroke-width=".6"/><path d="M18.500 2q5 1.500 9 6" fill="none" stroke="#E4E6EA" stroke-width="1"/><path d="M11 11l7 7" stroke="#9A9CA4" stroke-width="4"/><path d="M19 19.500l5.500 6.500" stroke="#A4A6AE" stroke-width="6.600" stroke-linecap="round"/><path d="M19.500 18.500l5.500 6.500" stroke="#D8DADE" stroke-width="1.600" stroke-linecap="round"/><ellipse cx="24.300" cy="25.800" rx="2.600" ry="1.600" transform="rotate(50 24.300 25.800)" fill="#FFFFFF" stroke="#8A8C94" stroke-width=".5"/><path d="M6 .8q5.500 1.300 5.700 6.500-.4 5-5.700 5.600-5 .1-5.800-4.900l3.200 2.300q3.800.2 4.400-3 .2-3.200-2.900-4.500z" fill="url(#gMet)" stroke="#55575F" stroke-width=".6"/></g><circle cx="17.8" cy="20" r="7.6" fill="#58B428"/><circle cx="17.8" cy="18.328" r="5.928" fill="#8CD85C" opacity=".75"/><circle cx="17.8" cy="16.2" r="1.292" fill="#fff"/><rect x="16.66" y="18.48" width="2.432" height="5.928" fill="#fff"/><rect x="15.520000000000001" y="18.48" width="2.28" height="1.3679999999999999" fill="#fff"/><rect x="15.520000000000001" y="23.344" width="4.712" height="1.216" fill="#fff"/></svg>
<svg style="left:1600px;top:140px" width="43" height="48" viewBox="0 0 43 48"><rect x="0" y="0" width="43" height="48" fill="#F8F8FA"/><circle cx="21.600" cy="21.800" r="21.400" fill="#FFF59D"/><path d="M21.600 7.200a14 14 0 0 1 9.800 24q-3 2.500-3.400 5.200h-12.800q-.4-2.700-3.400-5.200a14 14 0 0 1 9.800-24z" fill="#FFC22C"/><path d="M17.800 36.400v-12.800l-3-3.200 4-2.300 2.800 2.400 2.800-2.400 4 2.300-3 3.200v12.800" fill="none" stroke="#FFF59D" stroke-width="1.900" stroke-linejoin="round"/><path d="M15.200 36.400h12.800v6.200l-4.400 5.600h-4l-4.400-5.600z" fill="#4A62CC"/><path d="M15.200 38.500l12.800-1.500M15.200 41.500l12.800-1.500M16.500 44.500l10-1.300" stroke="#8FA8E8" stroke-width="1.200"/></svg>
<div class="t" style="left:181px;top:200.5px;font-size:13px;line-height:16px;color:#808080;letter-spacing:-0.209px;font-weight:bold;font-family:'DejaVu Sans',sans-serif;">Стол заказов (рмм закупщика)</div>
<div class="a" style="left:181px;top:217px;width:1468px;height:1px;background:#B9B086"></div>
<div class="a" style="left:201px;top:223px;width:1448px;height:590px;border:1px solid #B9B086;background:#FFFBF0"></div>
<div class="a" style="left:188px;top:223px;width:14px;height:1px;background:#B9B086"></div>
<div class="a" style="left:181px;top:223px;width:21px;height:53px;background:#FFFBF0;border:1px solid #B9B086;border-right:none;border-radius:7px 0 0 7px;box-shadow:inset 2px 0 0 #FBDDA0"></div>
<div class="vt" style="left:198px;top:232px">В пути</div>
<div class="a" style="left:181px;top:276px;width:21px;height:127px;background:#F0E8D4;border:1px solid #D6CDB0;border-right:1px solid #B9B086;border-radius:7px 0 0 7px"></div>
<div class="vt" style="left:197.5px;top:285.5px">В пути (просрочены)</div>
<div class="a" style="left:181px;top:403px;width:21px;height:107px;background:#F0E8D4;border:1px solid #D6CDB0;border-right:1px solid #B9B086;border-radius:7px 0 0 7px"></div>
<div class="vt" style="left:197px;top:411.5px">Необеспеченные</div>
<div class="a" style="left:181px;top:510px;width:21px;height:40px;background:#F0E8D4;border:1px solid #D6CDB0;border-right:1px solid #B9B086;border-radius:7px 0 0 7px"></div>
<div class="vt" style="left:197px;top:519px">Все</div>
<div class="a" style="left:206px;top:230px;width:1437px;height:24px;background:#F7EFC9"></div>
<svg style="left:211px;top:236px" width="14" height="12" viewBox="0 0 14 12"><g transform="scale(1 1)"><path d="M3.800 2.600a4.700 4.700 0 0 1 7.900 3.200" fill="none" stroke="#2E8B2E" stroke-width="1.400"/><path d="M10.200 9.400a4.700 4.700 0 0 1-7.900-3.200" fill="none" stroke="#2E8B2E" stroke-width="1.400"/><path d="M9 5.500h5.200l-2.600 3.900z" fill="#2E8B2E"/><path d="M5 6.500h-5.200l2.600-3.900z" fill="#2E8B2E"/></g></svg>
<div class="t" style="left:228px;top:235.5px;color:#43340A;">Обновить</div>
<div class="a" style="left:283px;top:233px;width:1px;height:19px;background:#CFC6A0"></div>
<div class="a" style="left:284px;top:233px;width:1px;height:19px;background:#FFFBEE"></div>
<svg style="left:291px;top:234px" width="16" height="16" viewBox="0 0 16 16"><rect x="4.5" y="0.5" width="11" height="10.500" rx="1" fill="#E8F0FA" stroke="#5A7AA8" stroke-width="1"/><rect x="2.5" y="2.5" width="11" height="10.500" rx="1" fill="#E8F0FA" stroke="#5A7AA8" stroke-width="1"/><rect x="0.5" y="4.5" width="11" height="10.500" rx="1" fill="#E8F0FA" stroke="#5A7AA8" stroke-width="1"/><rect x="1.500" y="5.500" width="9" height="8.500" fill="#fff" opacity=".7"/><path d="M2.500 9.500l2.800 3 5-6" fill="none" stroke="#2A9A2A" stroke-width="2.200"/></svg>
<svg style="left:314px;top:234px" width="16" height="16" viewBox="0 0 16 16"><rect x="4.5" y="0.5" width="11" height="10.500" rx="1" fill="#E8F0FA" stroke="#5A7AA8" stroke-width="1"/><rect x="2.5" y="2.5" width="11" height="10.500" rx="1" fill="#E8F0FA" stroke="#5A7AA8" stroke-width="1"/><rect x="0.5" y="4.5" width="11" height="10.500" rx="1" fill="#E8F0FA" stroke="#5A7AA8" stroke-width="1"/><rect x="1.500" y="5.500" width="9" height="8.500" fill="#fff" opacity=".7"/><rect x="2" y="7" width="8" height="3" fill="#C8D8EE"/></svg>
<div class="a" style="left:334px;top:233px;width:1px;height:19px;background:#CFC6A0"></div>
<div class="a" style="left:335px;top:233px;width:1px;height:19px;background:#FFFBEE"></div>
<svg style="left:341px;top:234px" width="16" height="16" viewBox="0 0 16 16"><text x="4.500" y="7.500" font-family="Liberation Serif,serif" font-size="9" font-weight="bold" text-anchor="middle" fill="#2A5A9A">А</text><text x="4.500" y="15.500" font-family="Liberation Serif,serif" font-size="9" font-weight="bold" text-anchor="middle" fill="#A01818">Я</text><path d="M12.500 2v11" stroke="#1A2A4A" stroke-width="1.200"/><path d="M10 11.500h5l-2.500 3.500z" fill="#1A2A4A"/></svg>
<svg style="left:364px;top:234px" width="16" height="16" viewBox="0 0 16 16"><text x="4.500" y="7.500" font-family="Liberation Serif,serif" font-size="9" font-weight="bold" text-anchor="middle" fill="#A01818">Я</text><text x="4.500" y="15.500" font-family="Liberation Serif,serif" font-size="9" font-weight="bold" text-anchor="middle" fill="#2A5A9A">А</text><path d="M12.500 2v11" stroke="#1A2A4A" stroke-width="1.200"/><path d="M10 11.500h5l-2.500 3.500z" fill="#1A2A4A"/></svg>
<div class="a" style="left:385px;top:233px;width:1px;height:19px;background:#CFC6A0"></div>
<div class="a" style="left:386px;top:233px;width:1px;height:19px;background:#FFFBEE"></div>
<svg style="left:391px;top:234px" width="16" height="16" viewBox="0 0 16 16"><defs><linearGradient id="gFun" x1="0" y1="0" x2="1" y2="0"><stop offset="0" stop-color="#B8C0C8"/><stop offset=".45" stop-color="#FFFFFF"/><stop offset="1" stop-color="#A8B0BA"/></linearGradient></defs><rect x=".5" y="4" width="9" height="10" fill="#fff" stroke="#5A7AA8" stroke-width=".8"/><path d="M2 7h5M2 9h5M2 11h5" stroke="#7A9AC8" stroke-width=".8"/><path d="M1 1h13l-4.500 5.500v7h-3.500v-7z" fill="url(#gFun)" stroke="#6E7884" stroke-width="1"/><path d="M13 5v8" stroke="#1A2A4A" stroke-width="1.100"/><path d="M11 12h4l-2 3z" fill="#1A2A4A"/></svg>
<svg style="left:414px;top:234px" width="16" height="16" viewBox="0 0 16 16"><defs><linearGradient id="gFun" x1="0" y1="0" x2="1" y2="0"><stop offset="0" stop-color="#B8C0C8"/><stop offset=".45" stop-color="#FFFFFF"/><stop offset="1" stop-color="#A8B0BA"/></linearGradient></defs><path d="M1 1h13l-4.500 5.500v7h-3.500v-7z" fill="url(#gFun)" stroke="#6E7884" stroke-width="1"/><rect x="9" y="6.500" width="6" height="8.500" fill="#fff" stroke="#5A9AD8" stroke-width=".9"/><path d="M10.500 12l1.200 1.500 2.300-3" fill="none" stroke="#2A6AB8" stroke-width="1"/></svg>
<svg style="left:437px;top:234px" width="16" height="16" viewBox="0 0 16 16"><defs><linearGradient id="gFun" x1="0" y1="0" x2="1" y2="0"><stop offset="0" stop-color="#B8C0C8"/><stop offset=".45" stop-color="#FFFFFF"/><stop offset="1" stop-color="#A8B0BA"/></linearGradient></defs><path d="M1 1h13l-4.500 5.500v7h-3.500v-7z" fill="#ECEEF2" stroke="#B4B8C0" stroke-width="1"/><path d="M10 10l5 5M15 10l-5 5" stroke="#B89AA0" stroke-width="1.600"/></svg>
<div class="a" style="left:459px;top:233px;width:1px;height:19px;background:#CFC6A0"></div>
<div class="a" style="left:460px;top:233px;width:1px;height:19px;background:#FFFBEE"></div>
<svg style="left:465px;top:234px" width="16" height="16" viewBox="0 0 16 16"><defs><linearGradient id="gFun" x1="0" y1="0" x2="1" y2="0"><stop offset="0" stop-color="#B8C0C8"/><stop offset=".45" stop-color="#FFFFFF"/><stop offset="1" stop-color="#A8B0BA"/></linearGradient></defs><rect x=".5" y="5" width="6" height="10" fill="#fff" stroke="#A8B0BC" stroke-width=".8"/><rect x="9" y="5" width="6" height="10" fill="#fff" stroke="#A8B0BC" stroke-width=".8"/><path d="M2 8h3M2 10h3M2 12h3M10.500 8h3M10.500 10h3M10.500 12h3" stroke="#B8C4D4" stroke-width=".8"/><path d="M1.500 1h13l-4.500 5.500v7h-4v-7z" fill="url(#gFun)" stroke="#6E7884" stroke-width="1" opacity=".92"/></svg>
<svg style="left:484px;top:241px" width="5" height="3" viewBox="0 0 5 3"><path d="M0 0h5l-2.500 3z" fill="#4A3508"/></svg>
<div class="a" style="left:1248px;top:235px;width:13px;height:13px;background:#fff;border:1px solid #A89F78;border-radius:3px;box-shadow:inset 1px 1px 1px #DDD6C0"></div>
<div class="t" style="left:1263px;top:235.5px;color:#43340A;">Клиент</div>
<div class="a inp" style="left:1306px;top:234px;width:93px;height:19px;"></div>
<div class="a btg" style="left:1398px;top:234px;width:16px;height:19px;"></div>
<div class="t" style="left:1401px;top:238.5px;color:#8A7A40;font-weight:bold">...</div>
<div class="a btg" style="left:1413px;top:234px;width:16px;height:19px;"></div>
<svg style="left:1417px;top:240px" width="8" height="7" viewBox="0 0 8 7"><path d="M1 .8l6 5.600M7 .8l-6 5.600" stroke="#6A4A10" stroke-width="1.400"/></svg>
<div class="a" style="left:1433px;top:237px;width:13px;height:13px;background:#fff;border:1px solid #A89F78;border-radius:3px;box-shadow:inset 1px 1px 1px #DDD6C0"></div>
<div class="t" style="left:1448px;top:237.5px;color:#43340A;">Поставщик</div>
<div class="a inp" style="left:1515px;top:233px;width:107px;height:19px;"></div>
<div class="a btg" style="left:1621px;top:233px;width:16px;height:19px;"></div>
<div class="t" style="left:1624px;top:237.5px;color:#8A7A40;font-weight:bold">...</div>
<div class="a" style="left:206px;top:260px;width:1437px;height:546px;background:#fff;border:1px solid #B9B086"></div>
<div class="a" style="left:207px;top:261px;width:1435px;height:35px;background:#F8F0DC"></div>
<div class="a" style="left:229px;top:261px;width:96px;height:35px;background:#D0CFB6"></div>
<div class="t" style="left:212px;top:264.5px;color:#43340A;">Ф.</div>
<div class="t" style="left:233px;top:264.5px;color:#43340A;">Артикул</div>
<div class="t" style="left:330px;top:264.5px;color:#43340A;">Бренд</div>
<div class="t" style="left:402px;top:264.5px;color:#43340A;">Номенклатура</div>
<div class="t" style="left:572px;top:264.5px;color:#43340A;">Хар. ном.</div>
<div class="t" style="left:646px;top:264.5px;color:#43340A;">№ зак.нар.</div>
<div class="t" style="left:743px;top:264.5px;color:#43340A;">Покупатель</div>
<div class="t" style="left:840px;top:264.5px;color:#43340A;">№ зак.пост.</div>
<div class="t" style="left:921px;top:264.5px;color:#43340A;">Поставщик</div>
<div class="t" style="left:995px;top:264.5px;color:#43340A;">Дата</div>
<div class="t" style="left:995px;top:277.5px;color:#43340A;">поступления</div>
<div class="t" style="left:1068px;top:264.5px;color:#43340A;">В пути под</div>
<div class="t" style="left:1068px;top:277.5px;color:#43340A;">заказ</div>
<div class="t" style="left:1130px;top:264.5px;color:#43340A;">Кол.</div>
<div class="t" style="left:1130px;top:277.5px;color:#43340A;">требуется</div>
<div class="t" style="left:1195px;top:264.5px;color:#43340A;">Не</div>
<div class="t" style="left:1195px;top:277.5px;color:#43340A;">обеспечено</div>
<div class="t" style="left:1276px;top:264.5px;color:#43340A;">Резерв</div>
<div class="t" style="left:1276px;top:277.5px;color:#43340A;">под заказ</div>
<div class="t" style="left:1341px;top:264.5px;color:#43340A;">Резерв по</div>
<div class="t" style="left:1341px;top:277.5px;color:#43340A;">компании</div>
<div class="t" style="left:1405px;top:264.5px;color:#43340A;">Свободный</div>
<div class="t" style="left:1405px;top:277.5px;color:#43340A;">остаток</div>
<div class="t" style="left:1472px;top:264.5px;color:#43340A;">Цена</div>
<div class="t" style="left:1472px;top:277.5px;color:#43340A;">закупки</div>
<div class="t" style="left:1537px;top:264.5px;color:#43340A;">Цена</div>
<div class="t" style="left:1537px;top:277.5px;color:#43340A;">продажи</div>
<div class="t" style="left:1593px;top:264.5px;color:#43340A;">Нацен...</div>
<div class="t" style="left:1593px;top:277.5px;color:#43340A;">%</div>
<div class="a" style="left:991px;top:297px;width:72px;height:18px;background:#FF0000"></div>
<div class="a" style="left:1126px;top:297px;width:64px;height:18px;background:#90EE90"></div>
<div class="a" style="left:1191px;top:297px;width:80px;height:18px;background:#90EE90"></div>
<div class="a" style="left:211px;top:299px;width:13px;height:13px;background:#fff;border:1px solid #C2B998"></div>
<div class="t" style="left:233px;top:301px;color:#000;">99901381</div>
<div class="t" style="left:330px;top:301px;color:#000;">SWAG</div>
<div class="t" style="left:402px;top:301px;color:#000;">Антифриз (красный)</div>
<div class="t" style="left:646px;top:301px;color:#000;">00000026818</div>
<div class="t" style="left:743px;top:301px;color:#000;">Степанова Нат...</div>
<div class="t" style="left:840px;top:301px;color:#000;">00000004511</div>
<div class="t" style="left:921px;top:301px;color:#000;">ЕвроАвто</div>
<div class="t" style="left:1064px;top:301px;color:#000;width:57px;text-align:right;">1,00</div>
<div class="t" style="left:1126px;top:301px;color:#000;width:60px;text-align:right;">4,00</div>
<div class="t" style="left:1272px;top:301px;color:#000;width:60px;text-align:right;">3,00</div>
<div class="t" style="left:1337px;top:301px;color:#000;width:59px;text-align:right;">6,00</div>
<div class="t" style="left:1401px;top:301px;color:#000;width:62px;text-align:right;">5,00</div>
<div class="t" style="left:1533px;top:301px;color:#000;width:51px;text-align:right;">832,00</div>
<div class="a" style="left:991px;top:316px;width:72px;height:18px;background:#FF0000"></div>
<div class="a" style="left:1126px;top:316px;width:64px;height:18px;background:#90EE90"></div>
<div class="a" style="left:1191px;top:316px;width:80px;height:18px;background:#90EE90"></div>
<div class="a" style="left:229px;top:316px;width:96px;height:18px;background:#4F69C6;outline:1px dotted #D8C890;outline-offset:-1px"></div>
<div class="a" style="left:211px;top:318px;width:13px;height:13px;background:#fff;border:1px solid #C2B998"></div>
<div class="t" style="left:233px;top:320px;color:#fff;">9461610111</div>
<div class="t" style="left:330px;top:320px;color:#000;">BOSCH</div>
<div class="t" style="left:402px;top:320px;color:#000;">ШАЙБА СКОЛЬЖЕНИЯ</div>
<div class="t" style="left:646px;top:320px;color:#000;">00000029321</div>
<div class="t" style="left:743px;top:320px;color:#000;">Митруков Алек...</div>
<div class="t" style="left:840px;top:320px;color:#000;">НД000000002</div>
<div class="t" style="left:921px;top:320px;color:#000;">АВТОПИТ...</div>
<div class="t" style="left:995px;top:320px;color:#000;">23.10.2019</div>
<div class="t" style="left:1064px;top:320px;color:#000;width:57px;text-align:right;">1,00</div>
<div class="t" style="left:1126px;top:320px;color:#000;width:60px;text-align:right;">1,00</div>
<div class="t" style="left:1468px;top:320px;color:#000;width:60px;text-align:right;">143,58</div>
<div class="t" style="left:1533px;top:320px;color:#000;width:51px;text-align:right;">222,40</div>
<div class="t" style="left:1589px;top:320px;color:#000;width:49px;text-align:right;">55,0</div>
<div class="a" style="left:991px;top:335px;width:72px;height:18px;background:#FF0000"></div>
<div class="a" style="left:1126px;top:335px;width:64px;height:18px;background:#90EE90"></div>
<div class="a" style="left:1191px;top:335px;width:80px;height:18px;background:#90EE90"></div>
<div class="a" style="left:211px;top:337px;width:13px;height:13px;background:#fff;border:1px solid #C2B998"></div>
<div class="t" style="left:233px;top:339px;color:#000;">9461610104</div>
<div class="t" style="left:330px;top:339px;color:#000;">BOSCH</div>
<div class="t" style="left:402px;top:339px;color:#000;">ПРИВОДНОЙ  ВАЛ</div>
<div class="t" style="left:646px;top:339px;color:#000;">00000029321</div>
<div class="t" style="left:743px;top:339px;color:#000;">Митруков Алек...</div>
<div class="t" style="left:840px;top:339px;color:#000;">НД000000002</div>
<div class="t" style="left:921px;top:339px;color:#000;">АВТОПИТ...</div>
<div class="t" style="left:995px;top:339px;color:#000;">23.10.2019</div>
<div class="t" style="left:1064px;top:339px;color:#000;width:57px;text-align:right;">1,00</div>
<div class="t" style="left:1126px;top:339px;color:#000;width:60px;text-align:right;">1,00</div>
<div class="t" style="left:1468px;top:339px;color:#000;width:60px;text-align:right;">915,34</div>
<div class="t" style="left:1533px;top:339px;color:#000;width:51px;text-align:right;">2 027,52</div>
<div class="t" style="left:1589px;top:339px;color:#000;width:49px;text-align:right;">122,0</div>
<div class="a" style="left:991px;top:354px;width:72px;height:18px;background:#90EE90"></div>
<div class="a" style="left:1126px;top:354px;width:64px;height:18px;background:#90EE90"></div>
<div class="a" style="left:1191px;top:354px;width:80px;height:18px;background:#90EE90"></div>
<div class="a" style="left:211px;top:356px;width:13px;height:13px;background:#fff;border:1px solid #C2B998"></div>
<div class="t" style="left:233px;top:358px;color:#000;">9461615357</div>
<div class="t" style="left:330px;top:358px;color:#000;">BOSCH</div>
<div class="t" style="left:402px;top:358px;color:#000;">РАСПРЕДЕЛИТ. ГОЛОВКА</div>
<div class="t" style="left:646px;top:358px;color:#000;">00000029321</div>
<div class="t" style="left:743px;top:358px;color:#000;">Митруков Алек...</div>
<div class="t" style="left:840px;top:358px;color:#000;">НД000000003</div>
<div class="t" style="left:921px;top:358px;color:#000;">Авторынок</div>
<div class="t" style="left:995px;top:358px;color:#000;">24.10.2019</div>
<div class="t" style="left:1064px;top:358px;color:#000;width:57px;text-align:right;">1,00</div>
<div class="t" style="left:1126px;top:358px;color:#000;width:60px;text-align:right;">1,00</div>
<div class="t" style="left:1468px;top:358px;color:#000;width:60px;text-align:right;">4 779,18</div>
<div class="t" style="left:1533px;top:358px;color:#000;width:51px;text-align:right;">8 301,36</div>
<div class="t" style="left:1589px;top:358px;color:#000;width:49px;text-align:right;">74,0</div>
<div class="a" style="left:991px;top:373px;width:72px;height:18px;background:#90EE90"></div>
<div class="a" style="left:1126px;top:373px;width:64px;height:18px;background:#90EE90"></div>
<div class="a" style="left:1191px;top:373px;width:80px;height:18px;background:#90EE90"></div>
<div class="a" style="left:211px;top:375px;width:13px;height:13px;background:#fff;border:1px solid #C2B998"></div>
<div class="t" style="left:233px;top:377px;color:#000;">9461614286</div>
<div class="t" style="left:330px;top:377px;color:#000;">BOSCH</div>
<div class="t" style="left:402px;top:377px;color:#000;">ПОРШЕНЬ НАСОСА</div>
<div class="t" style="left:646px;top:377px;color:#000;">00000029321</div>
<div class="t" style="left:743px;top:377px;color:#000;">Митруков Алек...</div>
<div class="t" style="left:840px;top:377px;color:#000;">НД000000004</div>
<div class="t" style="left:921px;top:377px;color:#000;">Автоконти...</div>
<div class="t" style="left:995px;top:377px;color:#000;">24.10.2019</div>
<div class="t" style="left:1064px;top:377px;color:#000;width:57px;text-align:right;">1,00</div>
<div class="t" style="left:1126px;top:377px;color:#000;width:60px;text-align:right;">1,00</div>
<div class="t" style="left:1468px;top:377px;color:#000;width:60px;text-align:right;">3 500,00</div>
<div class="t" style="left:1533px;top:377px;color:#000;width:51px;text-align:right;">6 552,00</div>
<div class="t" style="left:1589px;top:377px;color:#000;width:49px;text-align:right;">87,0</div>
<div class="a" style="left:207px;top:296px;width:1435px;height:1px;background:#B9B086"></div>
<div class="a" style="left:207px;top:315px;width:1435px;height:1px;background:#B9B086"></div>
<div class="a" style="left:207px;top:334px;width:1435px;height:1px;background:#B9B086"></div>
<div class="a" style="left:207px;top:353px;width:1435px;height:1px;background:#B9B086"></div>
<div class="a" style="left:207px;top:372px;width:1435px;height:1px;background:#B9B086"></div>
<div class="a" style="left:207px;top:391px;width:1435px;height:1px;background:#B9B086"></div>
<div class="a" style="left:228px;top:261px;width:1px;height:131px;background:#B9B086"></div>
<div class="a" style="left:325px;top:261px;width:1px;height:131px;background:#B9B086"></div>
<div class="a" style="left:397px;top:261px;width:1px;height:131px;background:#B9B086"></div>
<div class="a" style="left:567px;top:261px;width:1px;height:131px;background:#B9B086"></div>
<div class="a" style="left:641px;top:261px;width:1px;height:131px;background:#B9B086"></div>
<div class="a" style="left:738px;top:261px;width:1px;height:131px;background:#B9B086"></div>
<div class="a" style="left:835px;top:261px;width:1px;height:131px;background:#B9B086"></div>
<div class="a" style="left:916px;top:261px;width:1px;height:131px;background:#B9B086"></div>
<div class="a" style="left:990px;top:261px;width:1px;height:131px;background:#B9B086"></div>
<div class="a" style="left:1063px;top:261px;width:1px;height:131px;background:#B9B086"></div>
<div class="a" style="left:1125px;top:261px;width:1px;height:131px;background:#B9B086"></div>
<div class="a" style="left:1190px;top:261px;width:1px;height:131px;background:#B9B086"></div>
<div class="a" style="left:1271px;top:261px;width:1px;height:131px;background:#B9B086"></div>
<div class="a" style="left:1336px;top:261px;width:1px;height:131px;background:#B9B086"></div>
<div class="a" style="left:1400px;top:261px;width:1px;height:131px;background:#B9B086"></div>
<div class="a" style="left:1467px;top:261px;width:1px;height:131px;background:#B9B086"></div>
<div class="a" style="left:1532px;top:261px;width:1px;height:131px;background:#B9B086"></div>
<div class="a" style="left:1588px;top:261px;width:1px;height:131px;background:#B9B086"></div>
<div class="a" style="left:201px;top:824px;width:1448px;height:154px;border:1px solid #B9B086;background:#FFFBF0"></div>
<div class="a" style="left:188px;top:824px;width:14px;height:1px;background:#B9B086"></div>
<div class="a" style="left:181px;top:824px;width:21px;height:49px;background:#FFFBF0;border:1px solid #B9B086;border-right:none;border-radius:7px 0 0 7px;box-shadow:inset 2px 0 0 #FBDDA0"></div>
<div class="vt" style="left:198px;top:833px">Заказ</div>
<div class="a" style="left:181px;top:873px;width:21px;height:42px;background:#F0E8D4;border:1px solid #D6CDB0;border-right:1px solid #B9B086;border-radius:7px 0 0 7px"></div>
<div class="vt" style="left:197px;top:882px;color:#A8996A">Док.</div>
<div class="a" style="left:208px;top:831px;width:1433px;height:24px;background:#EEE6DD"></div>
<svg style="left:213px;top:837px" width="14" height="12" viewBox="0 0 14 12"><g transform="scale(1 1)"><path d="M3.800 2.600a4.700 4.700 0 0 1 7.900 3.200" fill="none" stroke="#2E8B2E" stroke-width="1.400"/><path d="M10.200 9.400a4.700 4.700 0 0 1-7.900-3.200" fill="none" stroke="#2E8B2E" stroke-width="1.400"/><path d="M9 5.500h5.200l-2.600 3.900z" fill="#2E8B2E"/><path d="M5 6.500h-5.200l2.600-3.900z" fill="#2E8B2E"/></g></svg>
<div class="t" style="left:230px;top:836.5px;color:#43340A;">Обновить</div>
<div class="a" style="left:285px;top:834px;width:1px;height:19px;background:#CFC6A0"></div>
<div class="a" style="left:286px;top:834px;width:1px;height:19px;background:#FBF8F2"></div>
<svg style="left:292px;top:835px" width="16" height="16" viewBox="0 0 16 16"><circle cx="8" cy="8" r="7" fill="#E8584E" stroke="#C8483E" stroke-width="1"/><circle cx="8" cy="6.800" r="5.400" fill="#F8A098" opacity=".6"/><path d="M5.400 5.400l5.200 5.200M10.600 5.400l-5.200 5.200" stroke="#fff" stroke-width="1.400" stroke-linecap="round"/></svg>
<div class="t" style="left:310px;top:836.5px;color:#43340A;letter-spacing:0.153px;">Отказ поставщика</div>
<div class="a" style="left:412px;top:834px;width:1px;height:19px;background:#CFC6A0"></div>
<div class="a" style="left:413px;top:834px;width:1px;height:19px;background:#FBF8F2"></div>
<svg style="left:418px;top:835px" width="17" height="17" viewBox="0 0 17 17"><circle cx="7.500" cy="7.500" r="6.800" fill="#fff" stroke="#5A6A8A" stroke-width="1.200"/><circle cx="7.500" cy="7.500" r="5.300" fill="#EAF2FA" stroke="#9AB" stroke-width=".6"/><path d="M7.500 3v4.500l-2.500 3" fill="none" stroke="#2858C8" stroke-width="1.200"/><path d="M7.500 7.500l3 1.500" stroke="#D03030" stroke-width="1"/><path d="M10.500 11l5 5M15.500 11l-5 5" stroke="#D81818" stroke-width="2"/></svg>
<div class="t" style="left:437px;top:836.5px;color:#43340A;letter-spacing:0.242px;">Изменить срок поставки</div>
<div class="a" style="left:208px;top:858px;width:1433px;height:113px;background:#fff;border:1px solid #B9B086"></div>
<div class="a" style="left:209px;top:859px;width:1431px;height:20px;background:#F8F0DC"></div>
<div class="a" style="left:209px;top:859px;width:446px;height:20px;background:#D0CFB6"></div>
<div class="a" style="left:209px;top:879px;width:1431px;height:1px;background:#B9B086"></div>
<div class="a" style="left:655px;top:859px;width:1px;height:21px;background:#B9B086"></div>
<div class="a" style="left:834px;top:859px;width:1px;height:21px;background:#B9B086"></div>
<div class="a" style="left:1102px;top:859px;width:1px;height:21px;background:#B9B086"></div>
<div class="a" style="left:1370px;top:859px;width:1px;height:21px;background:#B9B086"></div>
<div class="a" style="left:1415px;top:859px;width:1px;height:21px;background:#B9B086"></div>
<div class="a" style="left:1504px;top:859px;width:1px;height:21px;background:#B9B086"></div>
<div class="a" style="left:1549px;top:859px;width:1px;height:21px;background:#B9B086"></div>
<div class="t" style="left:213px;top:862.5px;color:#43340A;">Документ</div>
<div class="t" style="left:660px;top:862.5px;color:#43340A;">Дата</div>
<div class="t" style="left:839px;top:862.5px;color:#43340A;">Статус</div>
<div class="t" style="left:1107px;top:862.5px;color:#43340A;">Поставщик/склад/клиент</div>
<div class="t" style="left:1375px;top:862.5px;color:#43340A;">В пути</div>
<div class="t" style="left:1420px;top:862.5px;color:#43340A;">Дата пост.</div>
<div class="t" style="left:1509px;top:862.5px;color:#43340A;">Кол. ...</div>
<div class="t" style="left:1554px;top:862.5px;color:#43340A;">Ответственный</div>
<div class="a" style="left:209px;top:880px;width:1431px;height:19px;background:#FBF7FB"></div>
<div class="a" style="left:232px;top:880px;width:254px;height:19px;background:#4F69C6"></div>
<svg style="left:217px;top:883px" width="10" height="10" viewBox="0 0 10 10"><circle cx="5" cy="5" r="4.300" fill="#fff" stroke="#999" stroke-width="1"/><path d="M2.800 5h4.400" stroke="#666" stroke-width="1"/></svg>
<div class="t" style="left:235px;top:884px;color:#fff;letter-spacing:-0.063px;">Заказ-наряд 00000029321 от 17.10.2019 12:00:00</div>
<div class="t" style="left:254px;top:903px;">Заказ поставщику НД000000002 от 23.10.2019 12:35:56</div>
<div class="t" style="left:660px;top:884px;">17.10.2019 12:00:00</div>
<div class="t" style="left:660px;top:903px;">23.10.2019 12:35:56</div>
<div class="t" style="left:839px;top:884px;">Требуется</div>
<div class="t" style="left:839px;top:903px;">Заказан</div>
<div class="t" style="left:1107px;top:884px;">Митруков Александр Николаевич</div>
<div class="t" style="left:1107px;top:903px;">АВТОПИТЕР</div>
<div class="a" style="left:1371px;top:899px;width:45px;height:19px;background:#FFA500"></div>
<div class="a" style="left:1416px;top:899px;width:89px;height:19px;background:#FF0000"></div>
<div class="t" style="left:1371px;top:903px;width:45px;text-align:center;">1</div>
<div class="t" style="left:1421px;top:903px;">23.10.2019 0:0...</div>
<div class="t" style="left:1505px;top:884px;width:45px;text-align:center;">1</div>
<div class="t" style="left:1505px;top:903px;width:45px;text-align:center;">1</div>
<div class="t" style="left:1554px;top:884px;">Степанов Пав...</div>
<div class="t" style="left:1554px;top:903px;">Сайт</div>
<div class="a btg" style="left:1472px;top:982px;width:177px;height:24px;"></div>
<svg style="left:1476px;top:986px" width="14" height="15" viewBox="0 0 14 15"><path d="M.5 .5h9l3 3v11h-12z" fill="#F4F8FC" stroke="#8AA0C0" stroke-width="1"/><path d="M3 5.500h7M3 7.500h7M3 9.500h7M3 11.500h7" stroke="#B0C0DC" stroke-width="1"/></svg>
<div class="t" style="left:1516px;top:987.5px;color:#43340A;">Создать поступление</div>
<div class="a btn" style="left:1518px;top:1014px;width:131px;height:17px;"></div>
<div class="t" style="left:1518px;top:1017px;color:#43340A;width:127px;text-align:right;">свернуть панель &gt;&gt;</div>
<div class="a btn" style="left:181px;top:1014px;width:131px;height:17px;"></div>
<div class="t" style="left:185px;top:1017px;color:#43340A;">&lt;&lt; свернуть панель</div>
<div class="a" style="left:1670px;top:76px;width:186px;height:20px;background:#C6FFC6;border:1px solid #B9B086"></div>
<div class="t" style="left:1674px;top:79.5px;color:#000;">Подразделение 1 - автосервис 1</div>
<div class="a btg" style="left:1855px;top:76px;width:16px;height:20px;"></div>
<div class="t" style="left:1858px;top:81.5px;color:#8A7A40;font-weight:bold">...</div>
<div class="a btg" style="left:1870px;top:76px;width:16px;height:20px;"></div>
<svg style="left:1874px;top:83px" width="8" height="7" viewBox="0 0 8 7"><path d="M1 .8l6 5.600M7 .8l-6 5.600" stroke="#6A4A10" stroke-width="1.400"/></svg>
<div class="t" style="left:1670px;top:104px;font-size:13px;line-height:16px;color:#43340A;letter-spacing:0.440px;">Дата:</div>
<div class="t" style="left:1748px;top:104px;font-size:13px;line-height:16px;color:#43340A;letter-spacing:-0.399px;">17.10.2019 12:00:00</div>
<div class="t" style="left:1670px;top:126px;font-size:13px;line-height:16px;color:#43340A;letter-spacing:-0.800px;">№</div>
<div class="t" style="left:1748px;top:126px;font-size:13px;line-height:16px;color:#43340A;letter-spacing:-0.475px;">00000029321</div>
<div class="a btn" style="left:1865px;top:124px;width:21px;height:19px;"></div>
<svg style="left:1871px;top:127px" width="9" height="13" viewBox="0 0 9 13"><path d="M2.500 4v6.500a2 2 0 0 0 4 0v-8a1.500 1.500 0 0 0-3 0v7" fill="none" stroke="#111" stroke-width="1.300"/><path d="M6.500 3.500v7" stroke="#111" stroke-width="1.500"/></svg>
<div class="a" style="left:1670px;top:145px;width:171px;height:24px;border:1px solid #B9B086;background:#FFFBF0"></div>
<div class="t" style="left:1672px;top:148px;font-size:17px;line-height:20px;color:#008000;font-weight:bold;letter-spacing:.3px">В работе</div>
<div class="a btg" style="left:1846px;top:145px;width:40px;height:24px;"></div>
<div class="t" style="left:1846px;top:150.5px;color:#1A3A7A;width:40px;text-align:center;letter-spacing:.5px">SMS</div>
<div class="a" style="left:1670px;top:172px;width:201px;height:22px;background:#FFFF99;border:1px solid #B9B086"></div>
<div class="t" style="left:1673px;top:176.5px;color:#000;">Аппаратура на топливном участке</div>
<div class="a btg" style="left:1870px;top:172px;width:16px;height:22px;"></div>
<div class="t" style="left:1873px;top:179.5px;color:#8A7A40;font-weight:bold">...</div>
<div class="t" style="left:1670px;top:199px;font-size:13px;line-height:16px;color:#43340A;letter-spacing:0.513px;">Закрыт:</div>
<div class="t" style="left:1670px;top:221.5px;font-size:13px;line-height:16px;color:#43340A;letter-spacing:0.458px;">Клиент:</div>
<div class="t" style="left:1748px;top:221.5px;font-size:13px;line-height:16px;color:#43340A;letter-spacing:0.486px;text-decoration:underline;">Митруков Алек...</div>
<div class="a btn" style="left:1865px;top:219px;width:21px;height:19px;"></div>
<svg style="left:1871px;top:222px" width="9" height="13" viewBox="0 0 9 13"><path d="M2.500 4v6.500a2 2 0 0 0 4 0v-8a1.500 1.500 0 0 0-3 0v7" fill="none" stroke="#111" stroke-width="1.300"/><path d="M6.500 3.500v7" stroke="#111" stroke-width="1.500"/></svg>
<div class="t" style="left:1670px;top:244.5px;font-size:13px;line-height:16px;color:#43340A;letter-spacing:0.417px;">Конт. лицо:</div>
<div class="t" style="left:1670px;top:266.5px;font-size:13px;line-height:16px;color:#43340A;letter-spacing:0.620px;">Телефон:</div>
<svg style="left:1747px;top:266px" width="16" height="16" viewBox="0 0 16 16"><g transform="translate(-2.700 -2.700) scale(.89)"><path d="M6.620 10.790c1.440 2.830 3.760 5.140 6.590 6.590l2.200-2.200c.27-.27.67-.36 1.020-.24 1.120.37 2.330.57 3.570.57.55 0 1 .45 1 1V20c0 .55-.45 1-1 1-9.390 0-17-7.610-17-17 0-.55.45-1 1-1h3.500c.55 0 1 .45 1 1 0 1.250.2 2.450.57 3.570.11.35.03.74-.25 1.020l-2.200 2.200z" fill="#48C048" stroke="#98E898" stroke-width=".9"/></g></svg>
<div class="t" style="left:1764px;top:266.5px;font-size:13px;line-height:16px;color:#43340A;letter-spacing:-0.356px;text-decoration:underline;">+3 (323) 223-32...</div>
<div class="a btn" style="left:1865px;top:264px;width:21px;height:20px;"></div>
<svg style="left:1870px;top:268px" width="12" height="12" viewBox="0 0 12 12"><circle cx="4.800" cy="4.800" r="3.600" fill="#FFFBF0" stroke="#7A5A10" stroke-width="1.500"/><path d="M7.500 7.500l3.500 3.500" stroke="#7A5A10" stroke-width="2"/></svg>
<div class="t" style="left:1670px;top:286.5px;color:#3A2C08;letter-spacing:0.330px;font-weight:bold;">Автомобиль</div>
<div class="a" style="left:1670px;top:300px;width:216px;height:1px;background:#5A4A1E"></div>
<div class="a" style="left:1670px;top:302px;width:216px;height:1px;background:#5A4A1E"></div>
<div class="t" style="left:1670px;top:308.5px;font-size:13px;line-height:16px;color:#43340A;letter-spacing:0.251px;">Гос. номер:</div>
<div class="t" style="left:1748px;top:308.5px;font-size:13px;line-height:16px;color:#43340A;letter-spacing:-0.266px;text-decoration:underline;">334443-3433</div>
<div class="a btn" style="left:1865px;top:305px;width:21px;height:19px;"></div>
<svg style="left:1871px;top:308px" width="9" height="13" viewBox="0 0 9 13"><path d="M2.500 4v6.500a2 2 0 0 0 4 0v-8a1.500 1.500 0 0 0-3 0v7" fill="none" stroke="#111" stroke-width="1.300"/><path d="M6.500 3.500v7" stroke="#111" stroke-width="1.500"/></svg>
<div class="t" style="left:1670px;top:328.5px;font-size:13px;line-height:16px;color:#43340A;letter-spacing:0.507px;">Произв-ль:</div>
<div class="t" style="left:1748px;top:328.5px;font-size:13px;line-height:16px;color:#43340A;letter-spacing:0.042px;">Zexel</div>
<div class="t" style="left:1670px;top:348.5px;font-size:13px;line-height:16px;color:#43340A;letter-spacing:0.318px;">Модель:</div>
<div class="t" style="left:1748px;top:348.5px;font-size:13px;line-height:16px;color:#43340A;letter-spacing:0.297px;">Тнвд VE</div>
<div class="t" style="left:1670px;top:369.5px;color:#43340A;">Пробег:</div>
<div class="t" style="left:1748px;top:369px;font-size:12px;line-height:14px;color:#43340A;">1</div>
<div class="t" style="left:1670px;top:387.5px;color:#3A2C08;letter-spacing:0.564px;font-weight:bold;">Взаиморасчеты</div>
<div class="a" style="left:1670px;top:401px;width:216px;height:1px;background:#5A4A1E"></div>
<div class="a" style="left:1670px;top:403px;width:216px;height:1px;background:#5A4A1E"></div>
<div class="t" style="left:1670px;top:415px;color:#43340A;letter-spacing:-0.163px;">Мы должны:</div>
<div class="t" style="left:1748px;top:415px;color:#43340A;letter-spacing:-0.169px;text-decoration:underline;">33 718,78 руб.</div>
<div class="a btn" style="left:1859px;top:412px;width:27px;height:18px;"></div>
<svg style="left:1865px;top:415px" width="15" height="12" viewBox="0 0 15 12"><g transform="scale(1.07143 1)"><path d="M3.800 2.600a4.700 4.700 0 0 1 7.900 3.200" fill="none" stroke="#2E8B2E" stroke-width="1.400"/><path d="M10.200 9.400a4.700 4.700 0 0 1-7.900-3.200" fill="none" stroke="#2E8B2E" stroke-width="1.400"/><path d="M9 5.500h5.200l-2.600 3.900z" fill="#2E8B2E"/><path d="M5 6.500h-5.200l2.600-3.900z" fill="#2E8B2E"/></g></svg>
<div class="t" style="left:1670px;top:434.5px;color:#43340A;letter-spacing:0.049px;">По всем организациям:</div>
<div class="t" style="left:1799.4px;top:434.5px;color:#FF0000;letter-spacing:-0.240px;">33 718,78 руб.</div>
<div class="t" style="left:1670px;top:454.5px;color:#000080;letter-spacing:-0.174px;">Баланс бонусов: 0 руб.</div>
<div class="t" style="left:1670px;top:475px;color:#43340A;letter-spacing:-0.176px;">Отсрочка: 0 руб. - 0 дн.</div>
<div class="a btn" style="left:1859px;top:472px;width:27px;height:18px;"></div>
<svg style="left:1866px;top:475px" width="13" height="12" viewBox="0 0 13 12"><path d="M9 .5l3 3-7 7-3.500 1 .5-4z" fill="#48B030" stroke="#1A6A1A" stroke-width=".8"/><path d="M1.500 11.500l.5-2.500 2 2z" fill="#222"/></svg>
<div class="t" style="left:1670px;top:516px;font-size:18px;line-height:22px;color:#007000;-webkit-text-stroke:.3px #007000">Сумма: 33 718,78 руб.</div>
<div class="a" style="left:1670px;top:561px;width:216px;height:450px;border:1px solid #B9B086;background:#FFFBF0"></div>
<div class="a" style="left:1670px;top:543px;width:64px;height:19px;background:#FFFBF0;border:1px solid #B9B086;border-bottom:none;border-radius:7px 7px 0 0;box-shadow:inset 1px 2px 0 #FBD58E"></div>
<div class="t" style="left:1670px;top:546.5px;color:#43340A;width:64px;text-align:center;">События</div>
<div class="a" style="left:1740px;top:544px;width:56px;height:17px;background:#F0E8D4;border:1px solid #D6CDB0;border-bottom:none;border-radius:7px 7px 0 0"></div>
<div class="t" style="left:1740px;top:546.5px;color:#43340A;width:56px;text-align:center;">Задачи</div>
<div class="a" style="left:1677px;top:568px;width:204px;height:419px;border:1px solid #B9B086;background:#FFFBF0"></div>
<div class="a" style="left:1678px;top:569px;width:35px;height:20px;background:#F8F0DC"></div>
<div class="a" style="left:1714px;top:569px;width:150px;height:20px;background:#D0CFB6"></div>
<div class="t" style="left:1682px;top:572.5px;color:#43340A;">Д</div>
<svg style="left:1694px;top:575px" width="12" height="8" viewBox="0 0 12 8"><path d="M0 .5h12M1.500 2.500h9M3 4.500h6M4.500 6.500h3" stroke="#C8B890" stroke-width="1.200"/></svg>
<div class="t" style="left:1719px;top:572.5px;color:#43340A;">Содержание события</div>
<div class="t" style="left:1682px;top:594px;color:#000080;">19.10</div>
<div class="t" style="left:1719px;top:594px;color:#000080;">Форсунки хорошие</div>
<div class="t" style="left:1682px;top:613px;color:#000080;">18.10</div>
<div class="t" style="left:1719px;top:613px;color:#000080;">Процени: Корпус ТНВД,</div>
<div class="t" style="left:1719px;top:626px;color:#000080;">Поршень опережения, Вал</div>
<div class="t" style="left:1719px;top:639px;color:#000080;">газа, Подкачка, Пластина</div>
<div class="t" style="left:1719px;top:652px;color:#000080;">подкачки, Приводной вал,</div>
<div class="t" style="left:1719px;top:665px;color:#000080;">Шайба скольжения вала, ...</div>
<div class="t" style="left:1682px;top:684px;color:#000080;">17.10</div>
<div class="t" style="left:1719px;top:684px;color:#000080;">ТНВД разбираем</div>
<div class="t" style="left:1682px;top:703px;color:#000080;">17.10</div>
<div class="t" style="left:1719px;top:703px;color:#000080;">Принесли ТНВД и 4форс.</div>
<div class="t" style="left:1719px;top:716px;color:#000080;">Форсунки исправны</div>
<div class="t" style="left:1682px;top:735px;color:#000080;">17.10</div>
<div class="t" style="left:1719px;top:735px;color:#000080;">Занижена пусковая</div>
<div class="t" style="left:1719px;top:748px;color:#000080;">подача, отсутствует</div>
<div class="t" style="left:1719px;top:761px;color:#000080;">опережение впрыска</div>
<div class="a" style="left:1678px;top:589px;width:186px;height:1px;background:#B9B086"></div>
<div class="a" style="left:1678px;top:608px;width:186px;height:1px;background:#B9B086"></div>
<div class="a" style="left:1678px;top:679px;width:186px;height:1px;background:#B9B086"></div>
<div class="a" style="left:1678px;top:698px;width:186px;height:1px;background:#B9B086"></div>
<div class="a" style="left:1678px;top:730px;width:186px;height:1px;background:#B9B086"></div>
<div class="a" style="left:1678px;top:775px;width:186px;height:1px;background:#B9B086"></div>
<div class="a" style="left:1713px;top:569px;width:1px;height:207px;background:#B9B086"></div>
<div class="a" style="left:1864px;top:569px;width:1px;height:418px;background:#B9B086"></div>
<div class="a" style="left:1865px;top:569px;width:15px;height:417px;background:#FFFCF4"></div>
<div class="a" style="left:1865px;top:569px;width:15px;height:20px;background:#FBF6E8;border-bottom:1px solid #E2DAC0"></div>
<svg style="left:1868px;top:575px" width="9" height="7" viewBox="0 0 9 7"><path d="M0 7h9l-4.500-7z" fill="#D8D2C0"/></svg>
<div class="a" style="left:1865px;top:590px;width:15px;height:16px;background:#F4EEDC;border-bottom:1px solid #E2DAC0"></div>
<svg style="left:1870px;top:595px" width="6" height="6" viewBox="0 0 6 6"><circle cx="3" cy="3" r="2.200" fill="#DDD6C4"/></svg>
<div class="a" style="left:1865px;top:966px;width:15px;height:20px;background:linear-gradient(90deg,#FBF6E8,#EFE8D0);border-top:1px solid #E2DAC0"></div>
<svg style="left:1868px;top:974px" width="9" height="7" viewBox="0 0 9 7"><path d="M0 0h9l-4.500 7z" fill="#8A8A90"/></svg>
<div class="a" style="left:1677px;top:990px;width:13px;height:13px;background:#fff;border:1px solid #A89F78;border-radius:3px;box-shadow:inset 1px 1px 1px #DDD6C0"></div>
<div class="t" style="left:1692px;top:990.5px;color:#43340A;">Показывать авт. события</div>
<div class="a btn" style="left:1670px;top:1013px;width:216px;height:18px;"></div>
<div class="t" style="left:1670px;top:1015.5px;color:#43340A;width:216px;text-align:center;">Посмотреть незаписанные авто</div>
<div class="a" style="left:1897px;top:70px;width:22px;height:159px;background:#F0E8D4;border:1px solid #C9C0A0"></div>
<svg style="left:1900px;top:73px" width="17" height="14" viewBox="0 0 17 14"><path d="M1 4q7.500-5 15 0v2.500h-4v-2h-7v2h-4z" fill="#3A9AD8"/><path d="M3 12l2-5h7l2 5z" fill="#7AC8F0" stroke="#2A7AB8" stroke-width=".8"/><circle cx="8.500" cy="9" r="1.800" fill="#E8F6FF" stroke="#2A7AB8" stroke-width=".6"/></svg>
<div class="vt" style="left:1914px;top:89px;font-size:11px;color:#2A2208">Панель телефонии для 1С</div>
<div class="a" style="left:1px;top:1038px;width:172px;height:20px;background:#B4B3B6;border:1px solid #C9C0A2"></div>
<svg style="left:4px;top:1040px" width="16" height="16" viewBox="0 0 16 16"><ellipse cx="7.500" cy="2.800" rx="3.600" ry="2.400" fill="#F8C030"/><ellipse cx="6.500" cy="2.200" rx="1.500" ry="1" fill="#FFE890"/><circle cx="7.500" cy="9.800" r="5.600" fill="#EAF4FC" stroke="#7AA8D0" stroke-width="1.300"/><path d="M7.500 6.500v3.500l2.300 1.300" fill="none" stroke="#2A5AB0" stroke-width="1"/><circle cx="7.500" cy="10" r=".8" fill="#F0A020"/><path d="M3.500 14.500l-1 1.500M11.500 14.500l1 1.500" stroke="#7AA8D0" stroke-width="1.200"/></svg>
<div class="t" style="left:20.5px;top:1041.5px;color:#1A1A1A;letter-spacing:-0.114px;">Оповещение о задачах</div>
<div class="a" style="left:174px;top:1038px;width:172px;height:20px;background:#B6D0EB;border:1px solid #C9C0A2"></div>
<svg style="left:177px;top:1040px" width="16" height="16" viewBox="0 0 16 16"><rect x=".5" y="9.500" width="9" height="6" rx="1" fill="#D4EAFA" stroke="#2A7AB8" stroke-width="1"/><path d="M4.500 4v7.500" stroke="#111" stroke-width="1"/><path d="M2.500 10h4l-2 2.500z" fill="#111"/><path d="M4.500 3.500h4" stroke="#111" stroke-width="1" stroke-dasharray="1 1"/><path d="M11.500 0l4.500 4.500-4.500 4.500-4.500-4.500z" fill="#FFE238" stroke="#F0B400" stroke-width=".8"/><path d="M11.500 2l-2.500 2.500" stroke="#FFFBD0" stroke-width="1.200"/></svg>
<div class="t" style="left:193.5px;top:1041.5px;color:#2A2A2A;letter-spacing:-0.000px;">Рабочее место мастера</div>
<div class="a" style="left:347px;top:1038px;width:172px;height:20px;background:#B4B3B6;border:1px solid #C9C0A2"></div>
<svg style="left:350px;top:1040px" width="16" height="16" viewBox="0 0 16 16"><rect x="2.500" y="1.500" width="11" height="13" fill="#fff" stroke="#5A6A8A" stroke-width="1"/><path d="M5 12v-5M8 12v-7M11 12v-3" stroke="#D03030" stroke-width="1.600"/><path d="M4 12.500h8" stroke="#38A038" stroke-width="1"/></svg>
<div class="t" style="left:366.5px;top:1041.5px;color:#1A1A1A;letter-spacing:-0.104px;">Анализ цен (23.10.2019)</div>
<div class="a" style="left:520px;top:1038px;width:172px;height:20px;background:#B4B3B6;border:1px solid #C9C0A2"></div>
<svg style="left:523px;top:1040px" width="16" height="16" viewBox="0 0 16 16"><path d="M2.500 1.500h8l3 3v10h-11z" fill="#fff" stroke="#7A8AA0" stroke-width="1"/><path d="M4.500 5.500h6M4.500 7.500h6M4.500 9.500h6M4.500 11.500h6" stroke="#B4C0D0" stroke-width="1"/></svg>
<div class="t" style="left:539.5px;top:1041.5px;color:#1A1A1A;letter-spacing:-0.016px;">По...: На склад. Не проведен</div>
<div class="a" style="left:0px;top:1060px;width:1920px;height:1px;background:#D4CBB8"></div>
<div class="a" style="left:0px;top:1061px;width:1920px;height:1px;background:#FBF8F4"></div>
<div class="t" style="left:5px;top:1063.5px;color:#43340A;">Для получения подсказки нажмите F1</div>
<div class="a" style="left:1853px;top:1062px;width:28px;height:17px;border:1px solid;border-color:#D4CBB8 #FBF8F4 #FBF8F4 #D4CBB8"></div>
<div class="t" style="left:1853px;top:1064px;color:#A89A70;width:28px;text-align:center;">CAP</div>
<div class="a" style="left:1886px;top:1062px;width:33px;height:17px;border:1px solid;border-color:#D4CBB8 #FBF8F4 #FBF8F4 #D4CBB8"></div>
<div class="t" style="left:1886px;top:1064px;color:#43340A;width:33px;text-align:center;">NUM</div>
</div>
</body></html>
